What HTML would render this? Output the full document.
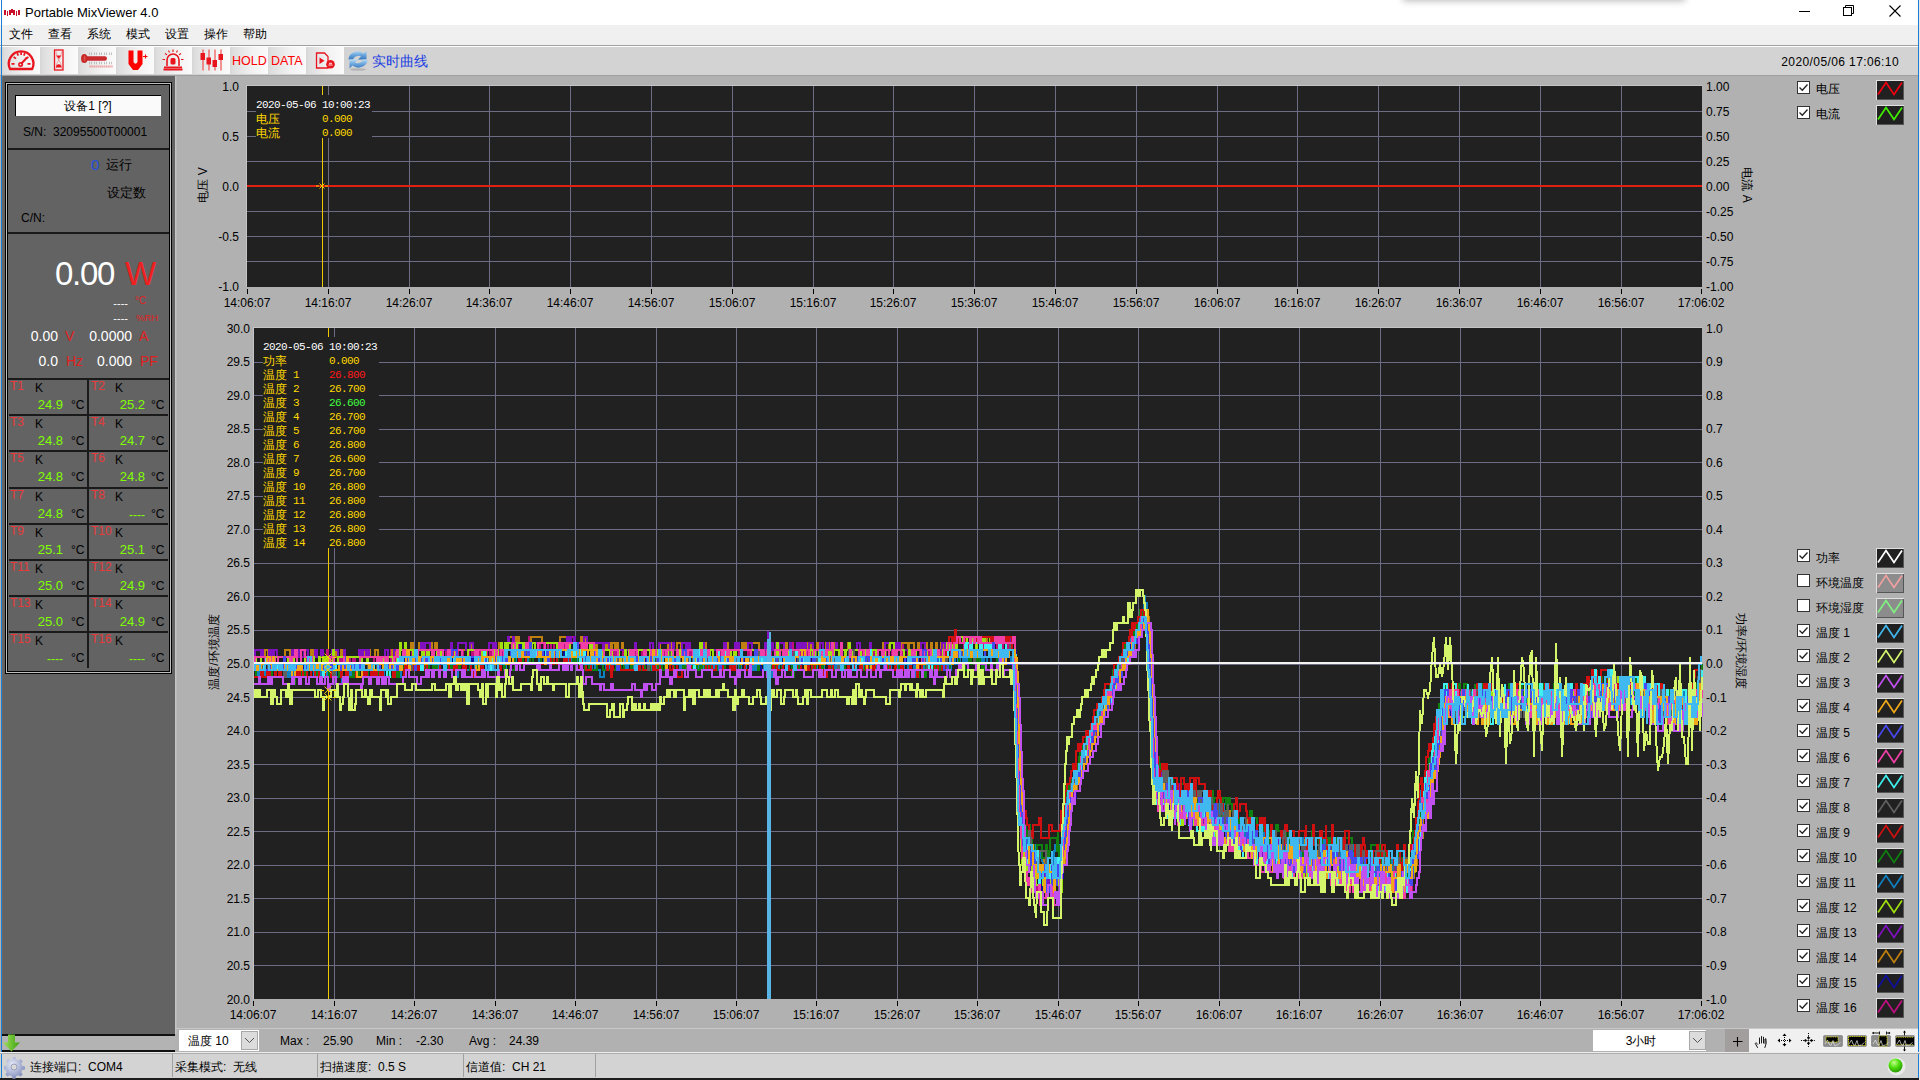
<!DOCTYPE html>
<html><head><meta charset="utf-8"><title>Portable MixViewer 4.0</title>
<style>
html,body{margin:0;padding:0;}
body{width:1920px;height:1080px;position:relative;overflow:hidden;background:#b3b3b3;font-family:"Liberation Sans",sans-serif;}
.b{position:absolute;}
.t{position:absolute;white-space:pre;font-family:"Liberation Sans",sans-serif;}
svg.b{overflow:visible;}
</style></head><body>
<div class="b" style="left:0px;top:0px;width:1920px;height:25px;background:#fff"></div>
<div class="b" style="left:0px;top:25px;width:1920px;height:20px;background:#f0f0f0"></div>
<div class="b" style="left:0px;top:45px;width:1920px;height:1px;background:#a0a0a0"></div>
<div class="b" style="left:0px;top:46px;width:1920px;height:1px;background:#fff"></div>
<div class="b" style="left:0px;top:47px;width:1920px;height:28px;background:#d3d3d3"></div>
<div class="b" style="left:0px;top:75px;width:1920px;height:1px;background:#a0a0a0"></div>
<div class="b" style="left:0px;top:76px;width:1920px;height:977px;background:#b1b1b1"></div>
<div class="b" style="left:0px;top:1053px;width:1920px;height:25px;background:#d3d3d3"></div>
<div class="b" style="left:0px;top:1078px;width:1920px;height:2px;background:#1c1c1c"></div>
<div class="b" style="left:1px;top:0px;width:1px;height:1078px;background:#1a7fd4"></div>
<div class="b" style="left:1918px;top:0px;width:1px;height:1078px;background:#1a7fd4"></div>
<div class="b" style="left:1919px;top:0px;width:1px;height:1080px;background:#e8e8e8"></div>
<div class="t" style="left:25px;top:0px;height:26px;line-height:26px;font-size:13px;color:#000;">Portable MixViewer 4.0</div>
<svg class="b" style="left:0;top:0" width="24" height="20" viewBox="0 0 24 20"><g fill="#c8102a"><rect x="4" y="10" width="2" height="5"/><rect x="7" y="11" width="1" height="5"/><path d="M9 10h2v-1h2v1h2v5h-2v-2h-2v2h-2z"/><rect x="16" y="11" width="1" height="5"/><rect x="18" y="10" width="2" height="5"/></g></svg>
<div class="b" style="left:1799px;top:11px;width:11px;height:1px;background:#000"></div>
<svg class="b" style="left:1843px;top:5px" width="12" height="12" viewBox="0 0 12 12"><rect x="0.5" y="2.5" width="8" height="8" fill="none" stroke="#000"/><path d="M2.5 2.5V0.5H10.5V8.5H8.5" fill="none" stroke="#000"/></svg>
<svg class="b" style="left:1889px;top:5px" width="12" height="12" viewBox="0 0 12 12"><path d="M0.5 0.5L11.5 11.5M11.5 0.5L0.5 11.5" stroke="#000" stroke-width="1.1"/></svg>
<div class="t" style="left:9px;top:22px;height:24px;line-height:24px;font-size:12px;color:#000;">文件</div>
<div class="t" style="left:48px;top:22px;height:24px;line-height:24px;font-size:12px;color:#000;">查看</div>
<div class="t" style="left:87px;top:22px;height:24px;line-height:24px;font-size:12px;color:#000;">系统</div>
<div class="t" style="left:126px;top:22px;height:24px;line-height:24px;font-size:12px;color:#000;">模式</div>
<div class="t" style="left:165px;top:22px;height:24px;line-height:24px;font-size:12px;color:#000;">设置</div>
<div class="t" style="left:204px;top:22px;height:24px;line-height:24px;font-size:12px;color:#000;">操作</div>
<div class="t" style="left:243px;top:22px;height:24px;line-height:24px;font-size:12px;color:#000;">帮助</div>
<div class="b" style="left:2px;top:47px;width:38px;height:27px;background:linear-gradient(to right,#d6d6d6 0,#dedede 3px,#f2f2f2 60%,#fbfbfb 100%)"></div>
<div class="b" style="left:40px;top:47px;width:38px;height:27px;background:linear-gradient(to right,#d6d6d6 0,#dedede 3px,#f2f2f2 60%,#fbfbfb 100%)"></div>
<div class="b" style="left:78px;top:47px;width:38px;height:27px;background:linear-gradient(to right,#d6d6d6 0,#dedede 3px,#f2f2f2 60%,#fbfbfb 100%)"></div>
<div class="b" style="left:116px;top:47px;width:38px;height:27px;background:linear-gradient(to right,#d6d6d6 0,#dedede 3px,#f2f2f2 60%,#fbfbfb 100%)"></div>
<div class="b" style="left:154px;top:47px;width:38px;height:27px;background:linear-gradient(to right,#d6d6d6 0,#dedede 3px,#f2f2f2 60%,#fbfbfb 100%)"></div>
<div class="b" style="left:192px;top:47px;width:38px;height:27px;background:linear-gradient(to right,#d6d6d6 0,#dedede 3px,#f2f2f2 60%,#fbfbfb 100%)"></div>
<div class="b" style="left:230px;top:47px;width:38px;height:27px;background:linear-gradient(to right,#d6d6d6 0,#dedede 3px,#f2f2f2 60%,#fbfbfb 100%)"></div>
<div class="b" style="left:268px;top:47px;width:38px;height:27px;background:linear-gradient(to right,#d6d6d6 0,#dedede 3px,#f2f2f2 60%,#fbfbfb 100%)"></div>
<div class="b" style="left:306px;top:47px;width:38px;height:27px;background:linear-gradient(to right,#d6d6d6 0,#dedede 3px,#f2f2f2 60%,#fbfbfb 100%)"></div>
<div class="t" style="right:21px;top:50px;height:24px;line-height:24px;font-size:12px;color:#000;text-align:right;letter-spacing:0.4px">2020/05/06 17:06:10</div>
<div class="b" style="left:1403px;top:-20px;width:282px;height:20px;background:#fff;box-shadow:0 1px 7px rgba(0,0,0,0.28)"></div>
<svg class="b" style="left:6px;top:49px" width="30" height="22" viewBox="0 0 30 22">
<path d="M4 20 A12.3 12.3 0 1 1 26.2 20 Z" fill="none" stroke="#e8141e" stroke-width="2.3" stroke-linejoin="round"/>
<g stroke="#e8141e" stroke-width="1.7"><path d="M5.5 14.8h3M21.5 14.8h3M7.6 8l2.4 1.6M20 9.6l2.4-1.6M11.2 4.2l1.1 2.5M17.8 6.7l1.1-2.5M15.1 3.2v2.8"/></g>
<path d="M15 15 L21 8.5" stroke="#e8141e" stroke-width="1.9"/><circle cx="14.6" cy="15.4" r="1.7" fill="none" stroke="#e8141e" stroke-width="1.6"/>
</svg>
<svg class="b" style="left:53px;top:49px" width="12" height="22" viewBox="0 0 12 22">
<rect x="1.5" y="1" width="8.5" height="20" fill="none" stroke="#e8141e" stroke-width="1.3"/>
<path d="M3 2.5 Q3 8 5.75 11 Q3 14 3 19.5 M8.5 2.5 Q8.5 8 5.75 11 Q8.5 14 8.5 19.5" fill="none" stroke="#f07070" stroke-width="0.6"/>
<path d="M3.3 6.5h4.9l-2.45 3.2z M3 18.5q0-3 2.75-3.3 2.75 0.3 2.75 3.3z" fill="#e8141e"/>
</svg>
<svg class="b" style="left:80px;top:51px" width="34" height="17" viewBox="0 0 34 17">
<g stroke="#b8b8b8" stroke-width="0.9"><path d="M9.5 1.5v2.5M11.5 1.5v2.5M14.5 1.5v2.5M16.5 1.5v2.5M19.5 1.5v2.5M21.5 1.5v2.5M24.5 1.5v2.5M26.5 1.5v2.5M29.5 1.5v2.5M31.5 1.5v2.5M9.5 10.8v2.5M11.5 10.8v2.5M14.5 10.8v2.5M16.5 10.8v2.5M19.5 10.8v2.5M21.5 10.8v2.5M24.5 10.8v2.5M26.5 10.8v2.5M29.5 10.8v2.5M31.5 10.8v2.5"/></g>
<rect x="4" y="5.3" width="23" height="4.4" rx="2.2" fill="#c92a30"/>
<ellipse cx="4.3" cy="7.5" rx="3.2" ry="4.5" fill="#c62828"/><ellipse cx="4.6" cy="7.5" rx="1" ry="3" fill="#e86a5a" opacity="0.6"/>
<path d="M9.5 15.6h23" stroke="#f08a8a" stroke-width="2" stroke-dasharray="1.2 0.8"/>
</svg>
<svg class="b" style="left:127px;top:49px" width="22" height="22" viewBox="0 0 22 22">
<path d="M1.5 1.5h5v11.5q2 3.5 4 0V1.5h5v13.5l-4.5 6h-5l-4.5-6z" fill="#f00"/>
<path d="M16 7.5h4.5M18.5 5.5v4" stroke="#f00" stroke-width="1.1"/>
</svg>
<svg class="b" style="left:162px;top:49px" width="22" height="22" viewBox="0 0 22 22">
<g stroke="#e8141e" stroke-width="1.1"><path d="M11 0.5v2.5M6.5 1.5l1 2M15.5 1.5l-1 2M3 4.5l2 1.3M19 4.5l-2 1.3M0.5 10.5h2.5M21.5 10.5h-2.5"/></g>
<path d="M5 17 V11 A6 6 0 0 1 17 11 V17" fill="none" stroke="#e8141e" stroke-width="1.6"/>
<rect x="8.5" y="9" width="5" height="6.5" rx="1.5" fill="#e8141e"/>
<rect x="2" y="17.5" width="18" height="1.8" fill="#e8141e"/><rect x="1.5" y="19.5" width="19" height="2" fill="#e8141e"/>
</svg>
<svg class="b" style="left:199px;top:49px" width="24" height="22" viewBox="0 0 24 22">
<g stroke="#f05050" stroke-width="1.2"><path d="M4 0.5v21M10 0.5v21M16 0.5v21M22 0.5v21"/></g>
<rect x="1.5" y="4" width="4.5" height="7" fill="#e8141e"/><rect x="7.5" y="8.5" width="4.5" height="7" fill="#e8141e"/>
<rect x="13.5" y="11" width="4.5" height="7" fill="#e8141e"/><rect x="19.5" y="5" width="4.5" height="6" fill="#e8141e"/>
</svg>
<div class="t" style="left:232px;top:48.5px;height:25.0px;line-height:25.0px;font-size:12.5px;color:#f00;">HOLD</div>
<div class="t" style="left:271px;top:48.5px;height:25.0px;line-height:25.0px;font-size:12.5px;color:#f00;">DATA</div>
<svg class="b" style="left:315px;top:52px" width="22" height="18" viewBox="0 0 22 18">
<path d="M1.5 1h8l3.5 3.5v11.5H1.5z" fill="none" stroke="#e8141e" stroke-width="1.3"/>
<path d="M4.5 5.5l5 3.3-5 3.3z" fill="#e8141e"/>
<circle cx="15.5" cy="12.2" r="4.3" fill="#e8141e"/><path d="M13.5 13h4M14 11.3h3" stroke="#fff" stroke-width="0.9"/>
</svg>
<svg class="b" style="left:346px;top:49px" width="24" height="22" viewBox="0 0 24 22">
<defs><linearGradient id="rg" x1="0" y1="0" x2="0" y2="1"><stop offset="0" stop-color="#b8dcf6"/><stop offset="0.5" stop-color="#6aa6dc"/><stop offset="1" stop-color="#3a78c0"/></linearGradient></defs>
<path d="M2.5 10.5 A9 8 0 0 1 17.5 4.5 L20.5 1.5 V10.5 H12 L15 7.5 A5.5 5 0 0 0 7 10.5 Z" fill="url(#rg)"/>
<path d="M21.5 10.5 A9 8 0 0 1 6.5 16.5 L3.5 19.5 V10.5 H12 L9 13.5 A5.5 5 0 0 0 17 10.5 Z" fill="url(#rg)"/>
<ellipse cx="12" cy="20.5" rx="8" ry="1.3" fill="#a0a0a0" opacity="0.6"/>
</svg>
<div class="t" style="left:372px;top:47px;height:28px;line-height:28px;font-size:14px;color:#1c3fe0;">实时曲线</div>
<div class="b" style="left:2px;top:76px;width:173px;height:958px;background:#636363"></div>
<div class="b" style="left:2px;top:76px;width:1px;height:958px;background:#6e6a66"></div>
<div class="b" style="left:175px;top:76px;width:1px;height:958px;background:#c4c4c4"></div>
<div class="b" style="left:176px;top:76px;width:1px;height:958px;background:#bababa"></div>
<div class="b" style="left:5px;top:82px;width:167px;height:592px;border:1px solid #000;box-sizing:border-box"></div>
<div class="b" style="left:6px;top:83px;width:165px;height:590px;border:1px solid #c0c0c0;box-sizing:border-box"></div>
<div class="b" style="left:7px;top:84px;width:163px;height:588px;border:1px solid #000;box-sizing:border-box"></div>
<div class="b" style="left:15px;top:95px;width:146px;height:21px;background:#fafafa;border-top:1px solid #000;border-left:1px solid #000;box-sizing:border-box"></div>
<div class="t" style="left:-112px;width:400px;top:94px;height:24px;line-height:24px;font-size:12px;color:#000;text-align:center;">设备1 [?]</div>
<div class="t" style="left:23px;top:120px;height:24px;line-height:24px;font-size:12px;color:#000;">S/N:&nbsp; 32095500T00001</div>
<div class="b" style="left:8px;top:148px;width:161px;height:2px;background:#1a1a1a"></div>
<div class="t" style="left:91px;top:150px;height:30px;line-height:30px;font-size:15px;color:#2050e0;">0</div>
<div class="t" style="left:106px;top:152px;height:26px;line-height:26px;font-size:13px;color:#000;">运行</div>
<div class="t" style="left:107px;top:180px;height:26px;line-height:26px;font-size:13px;color:#000;">设定数</div>
<div class="t" style="left:21px;top:206px;height:24px;line-height:24px;font-size:12px;color:#000;">C/N:</div>
<div class="b" style="left:8px;top:232px;width:161px;height:2px;background:#1a1a1a"></div>
<div class="t" style="right:1806px;top:241px;height:66px;line-height:66px;font-size:33px;color:#fff;text-align:right;letter-spacing:-1.3px">0.00</div>
<div class="t" style="left:125px;top:241px;height:66px;line-height:66px;font-size:33px;color:#f02020;">W</div>
<div class="t" style="right:1792px;top:292px;height:22px;line-height:22px;font-size:11px;color:#fff;text-align:right;">----</div>
<div class="t" style="left:135px;top:291px;height:20px;line-height:20px;font-size:10px;color:#e02020;">°C</div>
<div class="t" style="right:1792px;top:307px;height:22px;line-height:22px;font-size:11px;color:#fff;text-align:right;">----</div>
<div class="t" style="left:136px;top:307.5px;height:19.0px;line-height:19.0px;font-size:9.5px;color:#e02020;">%RH</div>
<div class="t" style="right:1862px;top:322px;height:28px;line-height:28px;font-size:14px;color:#fff;text-align:right;">0.00</div>
<div class="t" style="left:65px;top:322px;height:28px;line-height:28px;font-size:14px;color:#e02020;">V</div>
<div class="t" style="right:1788px;top:322px;height:28px;line-height:28px;font-size:14px;color:#fff;text-align:right;">0.0000</div>
<div class="t" style="left:139px;top:322px;height:28px;line-height:28px;font-size:14px;color:#e02020;">A</div>
<div class="t" style="right:1862px;top:347px;height:28px;line-height:28px;font-size:14px;color:#fff;text-align:right;">0.0</div>
<div class="t" style="left:66px;top:347px;height:28px;line-height:28px;font-size:14px;color:#e02020;">Hz</div>
<div class="t" style="right:1788px;top:347px;height:28px;line-height:28px;font-size:14px;color:#fff;text-align:right;">0.000</div>
<div class="t" style="left:140px;top:347px;height:28px;line-height:28px;font-size:14px;color:#e02020;">PF</div>
<div class="b" style="left:8px;top:378px;width:161px;height:2px;background:#1a1a1a"></div>
<div class="t" style="left:10px;top:374.0px;height:24px;line-height:24px;font-size:12px;color:#e83a3a;">T1</div>
<div class="t" style="left:35px;top:376.0px;height:24px;line-height:24px;font-size:12px;color:#000;">K</div>
<div class="t" style="right:1857px;top:392.0px;height:26px;line-height:26px;font-size:13px;color:#80ff00;text-align:right;">24.9</div>
<div class="t" style="left:71px;top:393.0px;height:24px;line-height:24px;font-size:12px;color:#000;">°C</div>
<div class="t" style="left:91px;top:374.0px;height:24px;line-height:24px;font-size:12px;color:#e83a3a;">T2</div>
<div class="t" style="left:115px;top:376.0px;height:24px;line-height:24px;font-size:12px;color:#000;">K</div>
<div class="t" style="right:1775px;top:392.0px;height:26px;line-height:26px;font-size:13px;color:#80ff00;text-align:right;">25.2</div>
<div class="t" style="left:151px;top:393.0px;height:24px;line-height:24px;font-size:12px;color:#000;">°C</div>
<div class="b" style="left:9px;top:414px;width:159px;height:2px;background:#1a1a1a"></div>
<div class="t" style="left:10px;top:410.2px;height:24px;line-height:24px;font-size:12px;color:#e83a3a;">T3</div>
<div class="t" style="left:35px;top:412.2px;height:24px;line-height:24px;font-size:12px;color:#000;">K</div>
<div class="t" style="right:1857px;top:428.2px;height:26px;line-height:26px;font-size:13px;color:#80ff00;text-align:right;">24.8</div>
<div class="t" style="left:71px;top:429.2px;height:24px;line-height:24px;font-size:12px;color:#000;">°C</div>
<div class="t" style="left:91px;top:410.2px;height:24px;line-height:24px;font-size:12px;color:#e83a3a;">T4</div>
<div class="t" style="left:115px;top:412.2px;height:24px;line-height:24px;font-size:12px;color:#000;">K</div>
<div class="t" style="right:1775px;top:428.2px;height:26px;line-height:26px;font-size:13px;color:#80ff00;text-align:right;">24.7</div>
<div class="t" style="left:151px;top:429.2px;height:24px;line-height:24px;font-size:12px;color:#000;">°C</div>
<div class="b" style="left:9px;top:450px;width:159px;height:2px;background:#1a1a1a"></div>
<div class="t" style="left:10px;top:446.4px;height:24px;line-height:24px;font-size:12px;color:#e83a3a;">T5</div>
<div class="t" style="left:35px;top:448.4px;height:24px;line-height:24px;font-size:12px;color:#000;">K</div>
<div class="t" style="right:1857px;top:464.4px;height:26px;line-height:26px;font-size:13px;color:#80ff00;text-align:right;">24.8</div>
<div class="t" style="left:71px;top:465.4px;height:24px;line-height:24px;font-size:12px;color:#000;">°C</div>
<div class="t" style="left:91px;top:446.4px;height:24px;line-height:24px;font-size:12px;color:#e83a3a;">T6</div>
<div class="t" style="left:115px;top:448.4px;height:24px;line-height:24px;font-size:12px;color:#000;">K</div>
<div class="t" style="right:1775px;top:464.4px;height:26px;line-height:26px;font-size:13px;color:#80ff00;text-align:right;">24.8</div>
<div class="t" style="left:151px;top:465.4px;height:24px;line-height:24px;font-size:12px;color:#000;">°C</div>
<div class="b" style="left:9px;top:487px;width:159px;height:2px;background:#1a1a1a"></div>
<div class="t" style="left:10px;top:482.6px;height:24px;line-height:24px;font-size:12px;color:#e83a3a;">T7</div>
<div class="t" style="left:35px;top:484.6px;height:24px;line-height:24px;font-size:12px;color:#000;">K</div>
<div class="t" style="right:1857px;top:500.6px;height:26px;line-height:26px;font-size:13px;color:#80ff00;text-align:right;">24.8</div>
<div class="t" style="left:71px;top:501.6px;height:24px;line-height:24px;font-size:12px;color:#000;">°C</div>
<div class="t" style="left:91px;top:482.6px;height:24px;line-height:24px;font-size:12px;color:#e83a3a;">T8</div>
<div class="t" style="left:115px;top:484.6px;height:24px;line-height:24px;font-size:12px;color:#000;">K</div>
<div class="t" style="right:1775px;top:502.6px;height:24px;line-height:24px;font-size:12px;color:#80ff00;text-align:right;">----</div>
<div class="t" style="left:151px;top:501.6px;height:24px;line-height:24px;font-size:12px;color:#000;">°C</div>
<div class="b" style="left:9px;top:523px;width:159px;height:2px;background:#1a1a1a"></div>
<div class="t" style="left:10px;top:518.8px;height:24px;line-height:24px;font-size:12px;color:#e83a3a;">T9</div>
<div class="t" style="left:35px;top:520.8px;height:24px;line-height:24px;font-size:12px;color:#000;">K</div>
<div class="t" style="right:1857px;top:536.8px;height:26px;line-height:26px;font-size:13px;color:#80ff00;text-align:right;">25.1</div>
<div class="t" style="left:71px;top:537.8px;height:24px;line-height:24px;font-size:12px;color:#000;">°C</div>
<div class="t" style="left:91px;top:518.8px;height:24px;line-height:24px;font-size:12px;color:#e83a3a;">T10</div>
<div class="t" style="left:115px;top:520.8px;height:24px;line-height:24px;font-size:12px;color:#000;">K</div>
<div class="t" style="right:1775px;top:536.8px;height:26px;line-height:26px;font-size:13px;color:#80ff00;text-align:right;">25.1</div>
<div class="t" style="left:151px;top:537.8px;height:24px;line-height:24px;font-size:12px;color:#000;">°C</div>
<div class="b" style="left:9px;top:559px;width:159px;height:2px;background:#1a1a1a"></div>
<div class="t" style="left:10px;top:555.0px;height:24px;line-height:24px;font-size:12px;color:#e83a3a;">T11</div>
<div class="t" style="left:35px;top:557.0px;height:24px;line-height:24px;font-size:12px;color:#000;">K</div>
<div class="t" style="right:1857px;top:573.0px;height:26px;line-height:26px;font-size:13px;color:#80ff00;text-align:right;">25.0</div>
<div class="t" style="left:71px;top:574.0px;height:24px;line-height:24px;font-size:12px;color:#000;">°C</div>
<div class="t" style="left:91px;top:555.0px;height:24px;line-height:24px;font-size:12px;color:#e83a3a;">T12</div>
<div class="t" style="left:115px;top:557.0px;height:24px;line-height:24px;font-size:12px;color:#000;">K</div>
<div class="t" style="right:1775px;top:573.0px;height:26px;line-height:26px;font-size:13px;color:#80ff00;text-align:right;">24.9</div>
<div class="t" style="left:151px;top:574.0px;height:24px;line-height:24px;font-size:12px;color:#000;">°C</div>
<div class="b" style="left:9px;top:595px;width:159px;height:2px;background:#1a1a1a"></div>
<div class="t" style="left:10px;top:591.2px;height:24px;line-height:24px;font-size:12px;color:#e83a3a;">T13</div>
<div class="t" style="left:35px;top:593.2px;height:24px;line-height:24px;font-size:12px;color:#000;">K</div>
<div class="t" style="right:1857px;top:609.2px;height:26px;line-height:26px;font-size:13px;color:#80ff00;text-align:right;">25.0</div>
<div class="t" style="left:71px;top:610.2px;height:24px;line-height:24px;font-size:12px;color:#000;">°C</div>
<div class="t" style="left:91px;top:591.2px;height:24px;line-height:24px;font-size:12px;color:#e83a3a;">T14</div>
<div class="t" style="left:115px;top:593.2px;height:24px;line-height:24px;font-size:12px;color:#000;">K</div>
<div class="t" style="right:1775px;top:609.2px;height:26px;line-height:26px;font-size:13px;color:#80ff00;text-align:right;">24.9</div>
<div class="t" style="left:151px;top:610.2px;height:24px;line-height:24px;font-size:12px;color:#000;">°C</div>
<div class="b" style="left:9px;top:631px;width:159px;height:2px;background:#1a1a1a"></div>
<div class="t" style="left:10px;top:627.4000000000001px;height:24px;line-height:24px;font-size:12px;color:#e83a3a;">T15</div>
<div class="t" style="left:35px;top:629.4000000000001px;height:24px;line-height:24px;font-size:12px;color:#000;">K</div>
<div class="t" style="right:1857px;top:647.4000000000001px;height:24px;line-height:24px;font-size:12px;color:#80ff00;text-align:right;">----</div>
<div class="t" style="left:71px;top:646.4000000000001px;height:24px;line-height:24px;font-size:12px;color:#000;">°C</div>
<div class="t" style="left:91px;top:627.4000000000001px;height:24px;line-height:24px;font-size:12px;color:#e83a3a;">T16</div>
<div class="t" style="left:115px;top:629.4000000000001px;height:24px;line-height:24px;font-size:12px;color:#000;">K</div>
<div class="t" style="right:1775px;top:647.4000000000001px;height:24px;line-height:24px;font-size:12px;color:#80ff00;text-align:right;">----</div>
<div class="t" style="left:151px;top:646.4000000000001px;height:24px;line-height:24px;font-size:12px;color:#000;">°C</div>
<div class="b" style="left:87px;top:378px;width:2px;height:290px;background:#1a1a1a"></div>
<div class="b" style="left:2px;top:1034px;width:173px;height:2px;background:#111"></div>
<div class="b" style="left:2px;top:1036px;width:173px;height:15px;background:#b3b3b3"></div>
<div class="b" style="left:2px;top:1050px;width:173px;height:2px;background:#111"></div>
<svg class="b" style="left:3px;top:1034px" width="18" height="18" viewBox="0 0 18 18">
<defs><linearGradient id="ga" x1="0" y1="0" x2="1" y2="0"><stop offset="0" stop-color="#9ee05a"/><stop offset="1" stop-color="#3ea010"/></linearGradient></defs>
<path d="M5 0.5h7v8h5l-8.5 9-8.5-9h5z" fill="url(#ga)"/></svg>
<div class="b" style="left:246px;top:85px;width:1456px;height:1px;background:#c4c4c4"></div>
<div class="b" style="left:246px;top:85px;width:1px;height:202px;background:#c4c4c4"></div>
<svg class="b" style="left:247px;top:86px" width="1455" height="201" viewBox="247 86 1455 201"><rect x="247" y="86" width="1455" height="201" fill="#212121"/><path d="M247 111.5H1702M247 136.5H1702M247 161.5H1702M247 186.5H1702M247 211.5H1702M247 236.5H1702M247 261.5H1702M328.5 86V287M409.5 86V287M489.5 86V287M570.5 86V287M651.5 86V287M732.5 86V287M813.5 86V287M893.5 86V287M974.5 86V287M1055.5 86V287M1136.5 86V287M1217.5 86V287M1297.5 86V287M1378.5 86V287M1459.5 86V287M1540.5 86V287M1621.5 86V287" stroke="#6c6c84" stroke-width="1" fill="none" shape-rendering="crispEdges"/><rect x="247" y="185" width="1455" height="2" fill="#e02010"/><rect x="322" y="86" width="1" height="201" fill="#f0c800"/><path d="M319.5 183.5l5 5M324.5 183.5l-5 5" stroke="#f0d000" stroke-width="1"/><path d="M316 186h3M325 186h3" stroke="#f0d000" stroke-width="1"/><rect x="256" y="95" width="116" height="43" fill="#212121"/></svg>
<div class="t" style="left:256px;top:94px;height:22px;line-height:22px;font-size:11px;color:#fff;font-family:'Liberation Mono',monospace;letter-spacing:-0.6px">2020-05-06 10:00:23</div>
<div class="t" style="left:256px;top:107px;height:24px;line-height:24px;font-size:12px;color:#ffd800;">电压</div>
<div class="t" style="left:322px;top:108px;height:22px;line-height:22px;font-size:11px;color:#ffd800;font-family:'Liberation Mono',monospace;letter-spacing:-0.6px">0.000</div>
<div class="t" style="left:256px;top:121px;height:24px;line-height:24px;font-size:12px;color:#ffd800;">电流</div>
<div class="t" style="left:322px;top:122px;height:22px;line-height:22px;font-size:11px;color:#ffd800;font-family:'Liberation Mono',monospace;letter-spacing:-0.6px">0.000</div>
<div class="t" style="right:1681px;top:75px;height:24px;line-height:24px;font-size:12px;color:#000;text-align:right;">1.0</div>
<div class="t" style="right:1681px;top:125px;height:24px;line-height:24px;font-size:12px;color:#000;text-align:right;">0.5</div>
<div class="t" style="right:1681px;top:175px;height:24px;line-height:24px;font-size:12px;color:#000;text-align:right;">0.0</div>
<div class="t" style="right:1681px;top:225px;height:24px;line-height:24px;font-size:12px;color:#000;text-align:right;">-0.5</div>
<div class="t" style="right:1681px;top:275px;height:24px;line-height:24px;font-size:12px;color:#000;text-align:right;">-1.0</div>
<div class="t" style="left:1706px;top:75px;height:24px;line-height:24px;font-size:12px;color:#000;">1.00</div>
<div class="t" style="left:1706px;top:100px;height:24px;line-height:24px;font-size:12px;color:#000;">0.75</div>
<div class="t" style="left:1706px;top:125px;height:24px;line-height:24px;font-size:12px;color:#000;">0.50</div>
<div class="t" style="left:1706px;top:150px;height:24px;line-height:24px;font-size:12px;color:#000;">0.25</div>
<div class="t" style="left:1706px;top:175px;height:24px;line-height:24px;font-size:12px;color:#000;">0.00</div>
<div class="t" style="left:1706px;top:200px;height:24px;line-height:24px;font-size:12px;color:#000;">-0.25</div>
<div class="t" style="left:1706px;top:225px;height:24px;line-height:24px;font-size:12px;color:#000;">-0.50</div>
<div class="t" style="left:1706px;top:250px;height:24px;line-height:24px;font-size:12px;color:#000;">-0.75</div>
<div class="t" style="left:1706px;top:275px;height:24px;line-height:24px;font-size:12px;color:#000;">-1.00</div>
<div class="t" style="left:47px;width:400px;top:291px;height:24px;line-height:24px;font-size:12px;color:#000;text-align:center;">14:06:07</div>
<div class="t" style="left:128px;width:400px;top:291px;height:24px;line-height:24px;font-size:12px;color:#000;text-align:center;">14:16:07</div>
<div class="t" style="left:209px;width:400px;top:291px;height:24px;line-height:24px;font-size:12px;color:#000;text-align:center;">14:26:07</div>
<div class="t" style="left:289px;width:400px;top:291px;height:24px;line-height:24px;font-size:12px;color:#000;text-align:center;">14:36:07</div>
<div class="t" style="left:370px;width:400px;top:291px;height:24px;line-height:24px;font-size:12px;color:#000;text-align:center;">14:46:07</div>
<div class="t" style="left:451px;width:400px;top:291px;height:24px;line-height:24px;font-size:12px;color:#000;text-align:center;">14:56:07</div>
<div class="t" style="left:532px;width:400px;top:291px;height:24px;line-height:24px;font-size:12px;color:#000;text-align:center;">15:06:07</div>
<div class="t" style="left:613px;width:400px;top:291px;height:24px;line-height:24px;font-size:12px;color:#000;text-align:center;">15:16:07</div>
<div class="t" style="left:693px;width:400px;top:291px;height:24px;line-height:24px;font-size:12px;color:#000;text-align:center;">15:26:07</div>
<div class="t" style="left:774px;width:400px;top:291px;height:24px;line-height:24px;font-size:12px;color:#000;text-align:center;">15:36:07</div>
<div class="t" style="left:855px;width:400px;top:291px;height:24px;line-height:24px;font-size:12px;color:#000;text-align:center;">15:46:07</div>
<div class="t" style="left:936px;width:400px;top:291px;height:24px;line-height:24px;font-size:12px;color:#000;text-align:center;">15:56:07</div>
<div class="t" style="left:1017px;width:400px;top:291px;height:24px;line-height:24px;font-size:12px;color:#000;text-align:center;">16:06:07</div>
<div class="t" style="left:1097px;width:400px;top:291px;height:24px;line-height:24px;font-size:12px;color:#000;text-align:center;">16:16:07</div>
<div class="t" style="left:1178px;width:400px;top:291px;height:24px;line-height:24px;font-size:12px;color:#000;text-align:center;">16:26:07</div>
<div class="t" style="left:1259px;width:400px;top:291px;height:24px;line-height:24px;font-size:12px;color:#000;text-align:center;">16:36:07</div>
<div class="t" style="left:1340px;width:400px;top:291px;height:24px;line-height:24px;font-size:12px;color:#000;text-align:center;">16:46:07</div>
<div class="t" style="left:1421px;width:400px;top:291px;height:24px;line-height:24px;font-size:12px;color:#000;text-align:center;">16:56:07</div>
<div class="t" style="left:1501px;width:400px;top:291px;height:24px;line-height:24px;font-size:12px;color:#000;text-align:center;">17:06:02</div>
<svg class="b" style="left:0;top:0" width="1920" height="1080"><path d="M247.5 289V294M328.5 289V294M409.5 289V294M489.5 289V294M570.5 289V294M651.5 289V294M732.5 289V294M813.5 289V294M893.5 289V294M974.5 289V294M1055.5 289V294M1136.5 289V294M1217.5 289V294M1297.5 289V294M1378.5 289V294M1459.5 289V294M1540.5 289V294M1621.5 289V294M1701.5 289V294" stroke="#000" stroke-width="1" shape-rendering="crispEdges"/></svg>
<div class="t" style="left:103px;top:173px;width:200px;height:24px;line-height:24px;font-size:12px;color:#000;text-align:center;transform:rotate(-90deg)">电压 V</div>
<div class="t" style="left:1647px;top:173px;width:200px;height:24px;line-height:24px;font-size:12px;color:#000;text-align:center;transform:rotate(90deg)">电流 A</div>
<div class="b" style="left:253px;top:327px;width:1449px;height:1px;background:#c4c4c4"></div>
<div class="b" style="left:253px;top:327px;width:1px;height:672px;background:#c4c4c4"></div>
<svg class="b" style="left:254px;top:328px" width="1448" height="671" viewBox="254 328 1448 671"><rect x="254" y="328" width="1448" height="671" fill="#212121"/><path d="M254 362.5H1702M254 395.5H1702M254 429.5H1702M254 462.5H1702M254 496.5H1702M254 529.5H1702M254 563.5H1702M254 596.5H1702M254 630.5H1702M254 664.5H1702M254 697.5H1702M254 731.5H1702M254 764.5H1702M254 798.5H1702M254 831.5H1702M254 865.5H1702M254 898.5H1702M254 932.5H1702M254 965.5H1702M334.5 328V999M414.5 328V999M495.5 328V999M575.5 328V999M656.5 328V999M736.5 328V999M816.5 328V999M897.5 328V999M977.5 328V999M1058.5 328V999M1138.5 328V999M1219.5 328V999M1299.5 328V999M1380.5 328V999M1460.5 328V999M1540.5 328V999M1621.5 328V999" stroke="#6c6c84" stroke-width="1" fill="none" shape-rendering="crispEdges"/><rect x="328" y="328" width="1" height="671" fill="#f0c800"/><path d="M254 664H256V657H265V664H269V657H278V664H289V657H292V664H297V657H306V664H309V657H320V664H323V657H324V664H327V650H328V657H331V664H333V657H340V664H342V657H345V664H348V657H350V664H353V657H355V664H361V657H362V664H374V657H377V664H384V657H387V664H391V650H392V664H395V650H397V657H399V664H402V657H404V664H406V657H408V650H412V657H414V650H426V657H432V650H440V657H446V650H447V657H448V650H449V657H454V650H456V657H458V650H463V657H469V650H472V657H474V650H479V657H480V650H483V657H486V650H487V657H490V650H492V657H497V650H499V657H500V650H503V664H505V657H507V650H513V643H514V650H519V643H527V650H529V637H530V643H531V650H538V643H540V650H544V643H548V650H551V643H554V650H557V643H558V657H559V643H561V650H565V643H566V650H570V637H575V650H578V643H581V650H583V643H584V650H586V657H591V650H594V657H595V650H597V657H611V650H613V657H614V650H615V657H616V650H618V664H622V657H623V650H631V657H635V643H636V650H637V657H642V650H644V657H645V650H653V657H658V650H660V657H661V650H663V657H664V650H666V657H670V650H677V657H683V650H689V657H691V650H693V657H698V650H699V657H706V650H713V657H719V650H720V657H722V650H723V657H724V650H725V657H730V650H734V657H739V650H748V657H750V650H755V657H756V650H765V657H770V650H771V657H772V664H775V657H776V650H778V657H780V650H783V657H784V650H786V657H787V650H790V657H792V643H793V657H796V650H799V657H800V650H803V657H805V650H807V657H809V650H811V657H821V650H828V657H829V650H833V657H845V650H851V657H852V650H861V657H863V650H868V657H870V650H871V657H872V650H874V657H877V650H882V657H884V650H885V657H886V650H892V657H895V650H901V657H902V643H903V650H908V657H910V650H911V657H914V650H920V657H928V650H929V657H931V650H934V657H937V650H940V664H941V650H944V657H945V650H947V657H951V650H953V643H954V650H957V643H964V650H969V643H971V650H976V643H977V637H981V650H983V643H986V650H988V643H990V650H997V643H1001V650H1003V643H1006V650H1008V643H1012V650H1015V643L1016 710L1017 737H1018V751H1019V771H1020V791L1021 818H1022V838H1023V845H1025V858H1026V851H1028V865H1030V851H1031V858H1032V872H1034V892H1037V885H1038V892H1039V878H1041V892H1051V898H1053V878H1054V885H1055V872H1057V885H1061V898L1062 865H1063V858H1064V838H1065V825H1066V818H1067V811H1068V798H1071V791H1074V778H1076V771H1077V778H1079V771H1081V757H1083V764H1084V757H1085V751H1086V744H1088V751H1089V744H1090V737H1091V744H1092V737H1094V731H1097V717H1098V724H1100V717H1102V710H1103V704H1108V697H1111V684H1113V690H1114V677H1117V670H1119V677H1120V664H1124V657H1126V650H1132V643H1134V637H1137V630H1138V623H1140V630H1141V623H1144V610H1147V617H1148V630H1149V650H1150V670L1151 704H1152V724H1153V744H1154V757L1155 778H1156V798H1157V778L1158 804H1160V798H1162V804H1163V811H1165V798H1166V804H1168V798H1174V818H1175V811H1176V818L1177 791H1178L1179 818H1181V825L1182 804H1183V798H1184V804H1187V811H1195V804H1200L1201 831H1202V825H1204V818H1206V825H1207V818H1209V831H1211V811L1212 838H1219V818H1220V825H1221V818H1222V831H1223V818H1224V831H1228V838H1233V831H1234V838H1236V845H1237V825H1239V845H1242V851L1243 825H1246V831H1247V851H1252V858H1255L1256 831L1257 858H1258V865L1259 838H1260V851H1261V858H1265V865H1267V851H1268V838H1270V845H1271V851H1272V845H1277V865H1278V858H1280V872L1281 845H1282V858H1290V845H1291V865H1292V845H1295L1296 872H1297L1298 851H1299V858H1303V865H1306V878H1308V872H1314V878H1316V872H1317V878H1319V865H1320V878H1321V872H1322V858H1323V851H1324L1325 872L1326 851H1327V865H1328V858H1329V872H1339V878H1345V858H1347V865H1350V885H1355L1356 858H1358V878H1359V865H1360V872H1362V865H1365V858L1366 885H1368L1369 858H1370V865H1383V878H1385V865H1388V885H1390V892H1398L1399 865H1400L1401 892H1412V878H1413V872H1414L1415 838H1417V831H1418V825H1419V838H1421V818H1422V804H1423V811H1425V804H1426L1427 778H1428V784H1430V778H1432V771H1433V764H1435V757H1436V744H1437V751H1438V744H1439V737H1440V731L1441 710H1442V704H1443V697H1444V690L1445 717H1446V710H1453V717L1454 690L1455 717H1459V704H1460V697H1462V704H1466V710H1468V697H1469V690H1470V710H1474V697H1475V717H1478V710H1479V717H1484V710H1486V690H1488V704H1490V717H1492L1493 690H1494V697H1500V690H1502L1503 717H1506L1507 690H1508V697H1511V717H1515V697H1518V704H1519V697H1525V690H1526V710H1527V717H1529V710H1539V690H1543V704H1547V710H1550V690H1551V710H1552V717L1553 690H1554V710H1556V690H1558V704H1560V697H1565V710H1575V690L1576 717H1578V697H1579V690H1581V710H1582V690H1583V710H1584V704H1585V697H1586V717H1591V704H1592V710H1593V697H1594V704H1599V684H1601V697H1602V710H1603V690H1606V684H1609V697H1610V684H1613L1614 710H1617V690H1618V710H1623V697H1627V690H1629V710H1634V697H1635V704H1636V684H1638L1639 710H1641V697H1643V684H1645V690H1646V710H1647V717H1648V710H1650V704H1651V710H1652V704H1653V717H1654V697H1656V704H1662V697H1665V717H1671V697H1673V717H1674V724H1675V717H1683V710H1684V704H1685V717H1693L1694 690H1696V684H1698V697H1699V684H1700V677H1702V670" stroke="#c01080" stroke-width="2" fill="none" stroke-linejoin="miter" shape-rendering="crispEdges"/><path d="M254 670H255V664H259V670H268V664H277V670H283V664H285V670H287V664H290V670H293V664H295V670H297V664H299V670H303V664H306V670H307V664H311V670H315V664H322V670H325V664H332V677H335V664H340V670H346V664H350V670H351V664H354V670H359V664H361V670H368V664H373V670H379V664H383V670H390V664H396V670H398V664H403V657H404V664H411V657H414V664H415V657H416V664H422V657H425V664H431V657H436V664H442V657H453V664H458V657H459V664H464V657H467V664H469V657H472V664H473V657H476V664H477V657H483V664H487V657H494V664H498V657H501V664H502V657H513V650H515V657H516V650H520V643H522V657H524V650H528V657H531V650H533V657H544V650H545V657H547V650H550V664H552V650H555V657H559V650H560V643H563V650H564V657H569V650H575V657H576V650H577V657H578V650H581V657H584V650H587V657H588V664H598V657H605V664H606V657H607V664H611V657H613V664H617V657H626V664H627V657H644V664H645V657H651V664H654V657H657V650H660V664H661V657H670V664H684V657H694V664H698V657H699V664H704V657H707V664H709V657H712V664H713V657H714V664H718V657H720V664H721V657H724V664H725V657H726V664H735V657H740V664H741V657H742V664H743V657H745V664H747V657H750V664H759V670H761V664H773V670H776V664H781V657H782V664H783V657H788V664H790V657H792V664H794V657H796V664H800V657H806V664H808V657H813V664H821V657H822V664H823V657H829V664H831V657H838V664H843V657H847V664H850V650H851V664H853V657H860V664H861V657H863V664H864V657H866V664H868V657H871V664H873V657H874V664H881V657H885V664H887V657H890V664H893V657H896V664H901V657H906V664H910V657H911V664H912V657H914V670H918V664H923V657H925V664H927V657H930V664H937V657H939V670H941V664H945V657H952V664H953V657H954V650H960V657H961V650H962V657H975V650H979V657H980V650H982V657H990V650H991V657H995V650H1004V657H1009V650H1016V664L1017 690L1018 717H1019V737H1020V757L1021 784L1022 811L1023 851H1026V858H1027V865H1028V851H1031V858H1032V865H1035V872H1036V865H1039V872H1040V892H1042L1043 865H1048V872H1052V892H1053V885H1056V872H1057V865H1060V878H1061V892H1062V878H1063V858H1064V851H1065V838H1066V831H1067V818H1068V811H1069V798H1070V804H1071V784H1072V791H1073V784H1075V798H1076V791H1077V778H1078V771H1081V764H1083V757H1084V764H1086V757H1089V751H1090V744H1091V737H1092V744H1094V737H1095V731H1097V724H1102V717H1103V710H1104V717H1105V710H1108V704H1109V697H1113V684H1115V690H1116V684H1119V670H1124V664H1128V657H1130V650H1131V643H1132V650H1134V637H1136V643H1137V637H1140V630H1143V623H1146V610H1147V617H1148V630H1149V637H1150V657H1151V670H1152V690H1153V710L1154 744H1155V757L1156 778H1157V771H1159V778H1164V798H1166V778H1168L1169 804H1170V811H1172V798H1174V804H1177V791H1182V811H1185V798H1188V804H1192V791H1196V798L1197 825H1198V818H1199V811H1201V818H1207V811H1208V798H1210V804H1211V818H1212V831H1213V811H1215V825H1216V811H1229V825H1235V818H1239V838H1244V825H1245V831H1246V825H1247V831H1248V845H1249V838H1250V831H1251V838H1253V831H1256V845H1257V851H1259V858H1262V845H1265V851H1266V845H1267V858H1272V845H1273V865L1274 838H1275L1276 865H1277V858H1280V838H1287V851H1288V838H1289V851H1291V845H1295V851H1299V865H1301V851H1302V865H1304V872H1306L1307 851H1308L1309 872H1311V858H1312V872H1314V865H1315V851H1318L1319 872L1320 845H1322V851H1324V845H1325L1326 872H1327L1328 845H1329V865H1332V845H1338L1339 872H1341V865H1342V872L1343 851H1344V858H1345V845H1348V865H1351V858H1355V851L1356 878H1358V858H1359V878H1360V872H1361L1362 851H1364V858H1366V878H1367V872H1371V878H1372V865H1374V858H1375V872H1377V878H1381V872H1382V878H1383V872H1385V878H1388V865H1390V878H1391V872H1392V885H1393V872H1394V878H1395V885H1396V865H1397V885H1398V865H1401V872H1402V865H1403V878H1404V865H1405V885H1406V878H1407V885H1409V872H1410V878H1411V865H1412V858H1414V851H1415V858H1416V851H1417V845H1418V831H1419V818H1420V811H1421V831L1422 798H1423V811H1425V791H1427V784H1428V778H1430V784H1431V778H1432V771H1433V764H1435V771H1436V764H1437V744H1438V737H1439V731H1440V737H1441V731H1442V724H1443V717H1444V710H1445V697H1446V690L1447 717H1451V710H1454V704H1457V690H1463V697H1465V690H1468V704H1470V717H1474V710H1477V704H1480V717H1481V704H1482V697H1483V704H1484V717H1487V704H1489V697H1490V704H1491V697H1492V710H1493V704H1494V690H1495V710H1496V697H1498V710H1500V704H1501V717H1503V704H1508V717H1509V697H1516V710H1518V697H1521V690H1523V704H1529V690H1532V704H1533V710H1534V704H1538V697H1539V710H1540V717H1541V704H1548V717H1549V704H1552V690H1553L1554 717H1559V697H1561V717H1565L1566 690L1567 717H1570V697H1572V690H1577V710H1580V697H1585V704H1588V710H1589V717H1591V710H1592V697H1597V690H1598V684H1603V697H1607V704H1609V684H1612V697H1614V704H1616V684H1617V677H1619V690H1620V677H1625L1626 704H1627V697H1628V704H1634V697H1639V690H1641V684H1643V677L1644 710H1650V717H1652V704H1657V710H1659V690H1662V704H1664V690H1665V704H1666V697H1668V710H1670V704H1671V710H1674V697H1675V717L1676 690H1677L1678 717H1681L1682 690H1683V710H1684V690H1685V710H1687V717H1688V697H1694V690H1696V684H1699V677H1700V684H1701V677H1702" stroke="#1010a0" stroke-width="2" fill="none" stroke-linejoin="miter" shape-rendering="crispEdges"/><path d="M254 657H265V650H268V657H269V650H270V657H285V650H290V657H311V650H312V657H313V650H314V657H332V650H336V657H341V650H343V657H364V650H370V657H375V650H378V657H392V650H393V657H396V650H397V657H404V650H411V643H413V650H419V643H420V650H422V643H432V650H435V643H437V650H470V643H471V650H499V643H502V650H508V643H509V637H516V643H517V637H519V643H531V637H542V643H560V637H569V643H581V637H582V643H586V637H587V643H596V650H597V643H606V650H607V643H608V650H610V643H611V650H612V643H615V650H616V643H618V650H622V643H623V650H660V643H668V650H669V643H672V650H677V643H681V650H703V643H704V650H705V643H706V650H727V643H728V650H737V643H738V650H742V643H743V650H744V643H745V650H747V643H759V650H786V643H787V650H805V643H806V650H807V643H808V650H810V643H812V650H817V643H818V650H826V643H829V650H832V643H835V650H848V643H850V650H883V643H889V650H890V643H895V650H896V643H898V650H901V643H908V650H909V643H914V650H918V643H919V650H926V643H927V650H931V643H932V650H936V643H937V650H941V643H943V650H954V643H960V637H966V643H970V637H971V643H987V637H990V643H999V637H1004V643H1015L1016 664H1017V677L1018 704L1019 731H1020V744L1021 771L1022 798L1023 825H1024V845H1025V851H1029V865H1031V845H1033V851H1034L1035 872H1036V878H1040V865H1043V885L1044 858L1045 885H1046V872H1047V885H1049V865H1052V878H1055V865H1056V872H1060V858H1061V865H1062V858H1064V865H1065V858H1066V845H1067V838H1068V825H1069V811H1070V804H1072V798H1073V791H1074V778H1075V791H1077V784H1079V771H1081V778H1082V771H1084V764H1087V751H1091V744H1092V737H1095V731H1097V724H1098V731H1099V724H1100V717H1102V724H1103V717H1104V710H1109V704H1111V697H1113V690H1114V684H1115V690H1116V684H1117V677H1120V670H1123V664H1126V657H1129V650H1130V657H1131V650H1132V643H1133V650H1135V637H1141V630H1144V623H1145V617H1147V610H1148V617H1149V637H1150L1151 664H1152V684H1153V704H1154V724H1155L1156 771H1157V791H1159V771L1160 798H1165V804H1168V791H1170V798H1172V811H1173V804H1179V798H1181V811H1183V818L1184 791H1187V798H1188V791H1189V798H1190V811H1195V791H1196V804H1200V818H1202V798H1203V804H1206V818H1207V811H1208V804H1209V811H1210V798H1211V811H1215V804H1217L1218 831H1221L1222 804H1224V818H1227V811H1230L1231 838H1233L1234 811H1235L1236 845H1237V831H1241V818H1247V825H1248V831H1249V851H1250V831H1251V825H1252V838H1259V845H1260V851H1264V858H1265V838H1270V831H1272V838H1274V851H1278V858H1281V851H1282V858H1283V838H1286V851H1290V865H1291V845H1294V851H1295V865H1302V851H1303V838H1304V858H1305V865H1306V858H1307V865H1314V858H1316V851H1317L1318 872H1319V858H1320V851H1324L1325 872H1326V858H1327V845H1328V851H1329V865H1332V845H1334V851H1335V865H1344V845H1345V858H1347V865H1348V851H1349V858H1351V865H1353V872L1354 851H1355V858H1359V865H1362V851H1363V865H1365V858H1371L1372 885H1373V872H1376V858H1379L1380 885H1381V872H1382V878H1383V885H1384V865H1385V878H1387V865H1392V858H1396V865H1397V858H1398V878H1400V885H1403V872H1406V858H1408V865H1410V858H1412V878H1414V872H1415V865H1417V858H1418V851H1420V845H1421V838H1423V831L1424 798H1425V818H1426V804H1427V811H1428V804H1429V798L1430 771H1431V778H1432V764H1434V757H1435V751H1436V744H1437V751H1439V744H1440V737H1441V724H1442V717H1445V710H1447V690L1448 717H1449V704H1450V710H1453V690H1457V697H1459V690H1465V704H1470V717H1474V697H1475V710H1477V704H1479V710H1481V717L1482 690H1485V697H1490V710H1491V704H1494V690H1499V697H1502V704H1503V717H1508V704H1509V697H1514V690H1517L1518 717H1519V710H1520V697H1523V704H1524V690H1525V710H1530V704H1531V710H1534V717H1535V704H1536V690H1537L1538 717H1540V710H1545V717H1547V704H1548V710H1550V690H1555V710H1556V697H1557V710H1558V690H1559V697H1560V717L1561 690H1562V710H1563V717H1566V704H1568V717H1569V697H1572V710H1574V690H1579V704H1580V717H1581V710H1583V704H1585V717H1590V710H1591V697H1594V690H1595V704H1601V684L1602 710L1603 684H1606V704H1607V710H1611V704H1613V690H1615V684H1616L1617 710H1623V690H1625V684H1626V704H1628V684H1629V697H1631V690H1633V697H1635V690H1636V697H1638V690H1639V697H1643V710H1646L1647 684L1648 717L1649 690H1653V704H1654V690H1655V697L1656 724H1658V710H1659V724H1661V717H1662V704H1664V710H1665V704H1667V724H1668L1669 697H1674L1675 724H1676L1677 697H1678V710H1680V717H1681V724H1682V710H1685V724H1688V710H1691V697H1696V690H1698V684H1700V697H1701V690H1702" stroke="#c08010" stroke-width="2" fill="none" stroke-linejoin="miter" shape-rendering="crispEdges"/><path d="M254 657H255V650H261V657H262V650H263V657H269V650H270V657H271V650H273V657H274V650H277V657H292V650H293V657H298V650H299V657H304V650H308V657H315V650H317V657H321V650H323V657H332V650H338V657H344V650H345V657H359V650H361V657H363V650H366V657H368V650H369V657H385V650H388V657H394V650H399V657H403V650H421V643H423V650H425V643H430V650H451V643H452V650H458V643H466V650H470V643H473V650H489V643H493V650H495V643H496V650H506V643H507V650H508V637H509V643H513V637H514V643H567V637H568V643H570V637H571V643H574V637H575V643H584V637H587V650H594V643H603V650H604V643H609V650H635V643H636V650H650V643H653V650H659V643H670V650H673V643H674V650H682V643H686V650H688V643H690V650H703V643H704V650H724V643H726V650H735V643H737V650H738V643H739V650H748V643H752V650H765V643H766V650H768V643H771V650H772V643H773V650H776V643H777V650H779V643H784V650H790V643H791V650H797V643H799V650H800V643H802V650H804V643H806V650H809V643H813V650H820V643H823V650H827V643H828V650H831V643H832V650H836V643H837V650H857V643H860V650H870V643H871V650H885V643H890V650H896V643H897V650H899V643H900V650H921V643H925V650H942V643H945V650H953V643H972V637H973V643H1010V637H1011V643H1015L1016 690L1017 717L1018 744H1019V764H1020V778L1021 804L1022 845H1023V865H1024V872H1026V858H1030V851L1031 878H1032V885H1035V865H1036V878H1037V872H1039V885H1040V872H1044V892H1045V885H1047V872H1049V885H1050V878H1051V872H1055V878H1056V885H1058V878H1062V858H1065V845H1066V831H1067V818H1068V811H1069V798H1071V791H1072V798H1073V791H1076V784H1077V778H1078V771H1080V778H1081V771H1083V757H1084V764H1086V757H1089V751H1091V744H1094V737H1097V731H1099V724H1102V717H1104V710H1105V704H1107V710H1108V704H1111V697H1112V690H1114V684H1116V677H1117V684H1118V690H1119V684H1120V670H1125V664H1128V657H1131V650H1134V643H1137V637H1138V630H1143V623H1146V617H1147V623H1148V643H1149V623L1150 650H1151V670L1152 704H1153V724H1155V744L1156 791H1157L1158 764H1159V771H1161L1162 798L1163 771H1164V778H1167V798H1169V804H1175V811L1176 784H1179V804H1182V811H1183V798H1188V791H1193V811H1195V798H1196V804H1199L1200 825H1203L1204 798H1207V811H1209V798L1210 831H1212V825H1213V811H1217V831H1219V825H1220V811H1224V831H1229V818H1230V825H1233V838H1234V825H1235V831H1236V825H1237V838H1239V818L1240 845H1241L1242 818H1246V838H1247V845H1249V825H1250V838H1252V851H1254V845H1261V858H1263V845H1268V851H1270V858H1271V865H1272V851H1273V865H1274L1275 838H1277V845H1278V838H1280V858H1283V865H1284V845H1286V851H1289V858H1290V865H1291V858H1292V845H1293V858H1295V845H1296V865H1297V845H1298V851H1300V865H1303V858H1304V865H1308V851H1309V865H1311V851L1312 872H1317V865H1321V845H1323L1324 872H1325V865H1329V872L1330 851H1336V845H1337V851H1341V858H1347V851H1348V858H1349V865H1354V878H1365V865H1371V872H1372V865H1373V872H1375V858H1377V865H1378V858H1383V878H1388V858H1391V872H1392V885L1393 858L1394 885L1395 858H1397V878H1399V865H1400V878H1402V885H1404V878H1408V885H1410L1411 858H1412V878H1413L1414 851H1416V845H1417V831H1418V838H1419V831H1420V825H1421V818H1422V811H1423V804H1424V811H1425V804H1426V784H1428V778H1431V771H1432V784L1433 751H1435V771H1436V764L1437 731H1438V724H1439V731H1440V724H1441V737H1442V731H1443V724H1444V717H1448L1449 690H1451L1452 717H1453L1454 690H1455V697H1457V690H1459V704H1462V690H1464V710H1469V704H1470V717H1478V710H1482V717H1485V710H1487V704H1488V697H1489V717H1493V704H1495V697H1497V690H1499V710H1505V690H1507V697H1510V704H1511V710H1517V690H1523V704H1524V710H1525V697H1526V690H1527V710H1531V717H1533V704H1534V697H1535V710H1536V690H1538V710H1544V690H1546V704H1547V717H1551L1552 690H1553V697H1554V710H1558V717H1562V697H1565V704H1567V697H1572V710H1577V717L1578 690H1579V704H1580V690H1586L1587 717H1588V704H1591V697H1593V710H1595V690H1596V684H1597V677H1599L1600 704H1606V690H1618V677L1619 704H1622V697H1623V690H1624V697H1627V704H1629V697H1631V704H1632V684H1634V697H1635V704H1639L1640 677H1644V684H1645V704H1646V690H1647V710H1650V717H1651V710H1652V704H1653V697H1655V690H1656V710H1658V717H1659V710H1660V704H1662V690H1671V704H1672V710H1675V717H1683L1684 690H1685V710H1689V697H1690V710H1691V717H1692V704H1695V710H1696V704H1699V697H1701V690H1702" stroke="#8010c0" stroke-width="2" fill="none" stroke-linejoin="miter" shape-rendering="crispEdges"/><path d="M254 664H255V657H256V664H261V657H270V664H275V657H288V664H291V657H293V664H294V657H297V664H305V657H311V664H312V657H314V664H319V657H320V664H323V657H324V664H325V657H327V664H333V650H334V664H338V657H362V664H367V657H368V664H381V657H382V664H383V657H385V664H387V657H393V664H397V657H400V643H401V650H405V643H406V650H413V657H416V650H422V657H424V650H427V657H428V664H429V650H433V657H434V650H437V657H438V650H441V657H448V650H450V657H452V650H455V657H457V650H462V657H468V650H476V657H482V650H485V657H486V650H494V657H496V650H498V657H501V643H502V650H505V643H507V650H508V643H513V650H517V643H523V650H524V643H525V650H529V643H531V650H532V643H535V650H538V643H557V650H558V643H566V650H568V643H570V657H573V650H577V643H582V650H585V643H590V650H592V643H593V650H594V657H599V650H600V657H603V650H610V657H612V650H619V664H621V657H625V650H626V657H627V664H628V657H629V650H630V657H638V650H650V657H654V650H657V657H659V650H662V657H668V650H672V657H680V650H683V657H694V650H697V657H700V643H702V657H703V650H706V657H710V650H713V657H717V650H718V664H719V657H722V650H726V657H730V650H731V657H734V650H735V657H736V650H760V657H762V650H764V664H770V657H777V643H778V657H784V650H787V657H788V650H796V657H797V650H806V657H810V650H813V657H815V650H819V657H821V650H826V657H828V650H829V657H831V650H832V657H834V650H839V657H840V650H845V657H846V650H849V643H850V650H851V657H852V650H861V657H864V650H865V657H869V650H870V657H872V650H876V657H878V650H885V657H889V650H890V643H894V650H904V657H909V650H910V657H916V650H927V657H932V650H933V657H934V650H936V657H943V650H944V657H945V650H947V643H950V650H952V643H955V650H957V637H959V643H960V637H963V643H966V637H967V643H972V637H976V650H977V637H980V643H981V637H983V643H984V637H985V643H990V637H991V643H993V637H999V643H1004V637H1005V643H1006V637H1009V643H1015L1016 704H1017V717L1018 751H1019V771L1020 811L1021 838L1022 865H1023V851H1024V845L1025 872H1027V858H1029V865H1032V872H1035V878H1036V885H1039V865H1043V885H1045V892L1046 865H1050L1051 892H1054V872H1055V865H1056V885H1058V865H1060L1061 892H1062V878L1063 851H1064V845H1065V831H1066V825H1067V811H1068V791H1069V784H1071V778H1072V791H1074V778H1076V771H1079V764H1081V757H1084V751H1088V744H1089V737H1092V731H1097V724H1098V717H1100V710H1102V704H1103V710H1105V704H1106V697H1108V690H1111V684H1112V690H1114V684H1117V670H1120V664H1122V657H1123V664H1125V657H1126V650H1132V643H1135V637H1136V630H1138V623H1141V617H1143V623H1144V617H1146V610H1147V623H1148V637L1149 670H1150V690H1152V710L1153 731H1154V751H1155V771H1157V791H1158V798H1163V804H1165V798H1168V791H1172V804H1177V818H1181V825H1183V818H1184V798H1190V818H1191V825H1194L1195 804H1196L1197 831H1201V825L1202 804H1204V818H1206V811H1207V831H1209V811H1210V825H1215V838H1217V825H1220V831H1221V818H1222V811H1223V818H1227V831H1228V845H1229V831H1233V818H1234V825H1235V838H1241V831H1244V838H1250V845H1258V851H1259V845H1260V838H1263L1264 865L1265 838H1266V858H1270V865H1274V858H1275V872H1289V858H1291V845L1292 872H1295L1296 851L1297 872H1298V858H1300V872H1303V878H1304V872H1305V858H1306V865H1307V878H1308L1309 851H1310L1311 872H1312V865H1313V872H1315V878H1319V858H1322V878H1324V858H1334V872H1335V865H1336V858H1338V865H1339V878H1340V865H1341V858H1342V865H1344V851L1345 878H1347V865H1349V878H1350V872H1354V878H1359V872H1360V858H1362V865H1366V885H1368L1369 858H1370V872H1379V892H1381V878H1382V885H1383V878H1389V892H1390V878H1391V892H1394V872H1395V885H1397V872H1398V878H1403V885H1404V872H1405V878H1406V885H1407V865H1410V878H1411V872H1412V858H1413V872H1414V865H1415V858L1416 825H1418V818H1419V811H1420V804H1421V798H1422V791H1424V784H1426V778H1427V771L1428 798H1429V791H1430V778H1431V784H1432V771H1434V764H1436V757H1437V751H1438V744H1439V737H1441V731H1442V717H1443V710H1444V704H1448V710H1449V690H1453V704H1461V690L1462 717H1467V704H1468V697H1469V690H1470V710H1471V717H1475V710H1480V704H1486V710H1490V717H1491V704H1492V690H1493V697H1495V704H1496V690H1504V697H1509V690H1511L1512 717H1514V697H1515V717H1516V697H1519V690H1522V710H1524V697H1527V717H1529V697H1530V717H1533V710H1534V690H1535L1536 717H1537V710H1540V690H1541V697H1546V704H1551V690H1554V710H1558V697H1561V704H1562V717H1564V697H1567V717L1568 690H1573V704H1575V690H1576V710H1582V697H1583V690L1584 717H1585V710H1586V717H1587V704H1588V697H1590V710H1593V704H1594V697H1596V677H1599V684H1601V690H1603V704H1604V690H1605V684H1607V704H1608V684H1611V704H1616V697H1618V677H1619V684H1622V677H1623V684H1625V677H1628V697H1629V684H1633V690H1635V684H1638V697H1640V677H1643V684H1644V704H1648V690H1649V697H1651V717L1652 690H1653L1654 717H1655L1656 690H1657L1658 717H1659V697H1660V717H1662V697H1668V704H1669V690H1670L1671 717L1672 690H1673V710H1674V717H1676V704H1677V690L1678 717H1685V704H1686V710H1689V717H1690V704H1691V697H1693V690H1694V710H1695V704H1696V710H1697V704H1698V697H1702" stroke="#a0e010" stroke-width="2" fill="none" stroke-linejoin="miter" shape-rendering="crispEdges"/><path d="M254 677H256V670H258V677H260V670H262V677H264V670H265V677H266V670H267V677H269V670H275V677H279V670H284V677H288V670H290V677H293V670H295V677H298V664H300V677H303V670H304V677H314V670H321V677H324V670H326V677H327V670H336V677H340V670H342V684H343V677H348V670H349V677H351V670H362V677H368V670H373V677H381V670H383V677H384V670H387V677H388V670H390V677H393V670H395V677H396V664H399V677H401V664H403V670H404V664H405V670H406V664H415V670H425V664H428V670H434V664H438V670H440V664H446V670H447V664H448V670H451V664H457V677H458V670H464V664H465V670H470V664H475V670H476V664H482V670H488V664H492V670H494V664H505V670H506V664H508V657H515V664H516V657H519V664H522V657H523V664H527V657H528V664H539V657H544V664H549V657H553V664H568V657H569V664H571V657H575V664H578V657H582V664H583V657H585V664H592V670H595V664H596V670H600V677H604V670H606V664H610V670H611V664H619V670H620V664H624V670H626V664H628V670H632V664H633V670H636V664H637V670H645V664H651V670H653V664H663V657H667V664H677V670H680V664H681V670H689V664H690V670H695V664H696V670H698V664H699V670H702V664H703V670H714V657H715V664H717V670H718V664H724V670H725V664H732V670H739V664H741V670H745V664H746V670H753V664H754V670H756V664H758V670H759V664H764V670H772V677H774V670H775V664H779V670H783V664H786V670H789V664H793V670H808V664H813V670H816V664H817V670H821V664H824V670H834V664H836V670H841V664H843V670H849V664H855V670H856V664H863V670H866V664H871V670H872V664H875V670H877V664H879V670H891V664H892V657H895V670H896V664H897V670H898V664H902V670H904V664H908V670H914V664H915V677H916V670H919V664H923V670H925V664H930V670H934V664H935V670H937V657H939V670H951V664H953V657H955V664H958V657H959V664H960V657H963V664H964V657H965V664H967V657H968V664H969V657H975V664H976V657H977V664H978V657H982V664H984V657H987V664H991V657H998V664H1001V657H1002V664H1004V657H1006V664H1011V657H1013V664H1015V684H1016V697H1017V717L1018 744L1019 771L1020 798L1021 825H1022V831H1024V838H1026V845H1028V838H1029V825H1030V845H1033V851H1035V845H1036V858H1037V865H1039V858H1040V851H1042L1043 872H1053V858H1054V851H1055V845H1059V858H1061V872L1062 845H1063V831H1065V818H1066V804H1067V791H1068V798H1069V791H1071V784H1074V778H1076V764H1081V751H1082V757H1084V751H1086V744H1087V737H1088V744H1089V737H1092V731H1095V724H1097V717H1100V710H1103V704H1105V697H1106V690H1107V697H1108V690H1109V697H1111V684H1114V677H1117V670H1118V664H1119V670H1120V664H1123V657H1126V650H1129V637H1131V643H1132V637H1133V630H1135V623H1138V617H1139V623H1141V617H1142V610H1144V596H1145V603H1147V623L1148 664H1149V684H1150V677L1151 710L1152 737H1153V744H1154V764L1155 791H1156V778H1159V784H1160V778H1164V784H1168V778L1169 804H1173V791H1175V811H1180V798H1182V804H1183V811H1184L1185 784H1187V791H1188L1189 818H1191L1192 791H1196V798H1197V791H1198L1199 818H1200V811H1201V818H1202V798H1205V804H1206V818H1209V804H1210V818H1211V811H1213V798H1214V811H1215V831H1217V818H1218V825H1219V818H1220V804H1221V818H1222V811H1223V804H1224V818H1225V831H1226V811H1227V818H1231V831H1233V811H1235V825H1237V831H1239V818H1241L1242 845H1244V825H1245V838H1246V825H1247V838H1248V831H1249V838H1250V831H1251V838H1254V845H1261V851H1263V831H1265V845H1266V851H1271V831H1274L1275 865H1278V851H1281V845H1285V851H1286V845H1289V858H1292V838H1293V851H1297V865H1301L1302 838H1303V858H1307V838H1308V845H1309V851H1315V865H1319V845H1323V838H1324V851H1326V838H1331V851H1333V865H1341V845H1342V851H1345L1346 872H1349L1350 845H1353V858H1365V872H1372L1373 851H1376V858H1377V878L1378 851L1379 878H1380V885H1382V878H1388V885H1389L1390 858H1391V878H1392V858H1393L1394 885H1396V878H1398V885H1402V865H1406V885H1408L1409 858H1412V851H1413V845H1414V838H1415V831H1417V838H1418V831H1419V811H1420V798H1421V791H1425V784H1426V778H1427V798H1428V791H1430V784H1431V778H1432V771H1433V764H1434V751H1435V737H1436V731H1437V724H1438V737H1439V731L1440 710H1442V704H1443V710H1446V690H1447L1448 717H1449V710H1452V690H1453V710H1457V690H1460V710H1462V704H1463V690H1464V710H1465V697H1466V704H1468V690H1471V710H1475V697H1477V690H1479V710H1480V704H1481V697H1482V710H1485V697H1491V717H1492V697H1496V704H1497V690H1503L1504 717H1506V704H1507V710H1509V717H1514V704H1517V697H1519V710H1520V690H1522V704H1525V697H1526V717H1527V704H1528V717H1529V704H1531V697H1532V710H1537V717H1538V697H1539V704H1541V690H1543V697H1544V690H1546V710H1548V697H1549V704H1553V710H1554V717H1556V697H1557V710H1564V697H1566V704H1567V710H1569V697H1570V690H1571V710H1572V690H1576V704H1579V697H1581V717H1582V704H1584V717H1587V704H1588V697H1589V690H1590V710H1592V704H1593V690H1594V684H1598V697H1599V677L1600 704H1601V690H1604V697H1607V677H1608V684H1609V704H1612V697H1614V677H1616V697H1617V704H1621L1622 677H1625V690H1627V677L1628 704H1630V690H1632V677H1635V690H1639V697H1640V704H1642V697H1646V710H1648V717H1658V697H1660V690H1663V704H1664V697H1665V717H1666V710H1667V717H1668L1669 690H1670L1671 717H1676V710H1678V704H1679V697H1680V690H1681L1682 717L1683 690H1685V710H1691V690H1693V710L1694 684H1695L1696 710L1697 684H1699V697H1702V690" stroke="#1080c0" stroke-width="2" fill="none" stroke-linejoin="miter" shape-rendering="crispEdges"/><path d="M254 670H256V677H261V670H269V677H272V670H280V677H285V670H292V677H294V684H295V677H296V670H297V677H300V670H301V677H303V670H304V677H305V670H306V677H307V670H311V677H317V670H324V677H325V670H329V677H335V670H339V677H341V670H347V677H353V670H354V677H359V670H362V677H365V670H368V677H373V670H375V677H379V670H383V677H388V670H390V677H397V670H398V677H399V670H400V664H403V670H409V664H411V670H415V664H417V670H426V664H427V670H429V664H433V670H434V664H435V670H437V664H447V670H451V664H452V670H458V664H459V657H460V670H464V664H470V670H478V664H481V670H483V664H496V657H498V670H501V664H504V670H505V657H507V664H510V670H515V657H522V664H523V657H526V664H530V657H533V664H541V657H552V664H557V657H558V664H573V657H575V664H576V657H579V664H585V670H589V664H591V670H597V664H603V670H616V664H618V670H619V664H621V670H624V664H631V670H632V664H635V670H637V664H639V670H645V664H649V670H650V664H655V657H658V670H661V664H662V670H665V664H667V670H674V664H683V670H685V664H687V670H690V664H691V670H693V664H697V670H700V664H702V670H705V664H707V670H711V664H716V670H717V664H721V670H724V664H725V670H733V664H740V670H750V664H758V670H759V657H767V677H768V664H772V670H775V664H777V670H782V664H792V677H794V664H799V670H800V664H801V670H807V664H808V670H812V664H813V670H816V664H821V670H823V664H829V670H831V664H832V670H842V664H843V670H845V664H849V670H856V664H862V670H865V664H866V670H869V664H870V670H871V664H887V670H888V664H889V670H890V664H899V670H900V664H910V670H911V664H918V677H919V664H922V670H924V677H926V664H930V670H934V664H936V670H940V664H943V670H944V664H946V670H950V657H959V664H965V670H968V664H969V657H971V664H976V657H977V664H978V657H980V664H982V670H984V664H997V657H1005V664H1013L1014 690H1015V704H1016L1017 731H1018V751L1019 778L1020 804H1022L1023 831H1024V825H1026V831H1027V838H1029V825H1030V845H1031V831H1032V845H1034V851H1036V858H1037V845H1042V858H1046V845H1047V858H1049V851H1050V838H1057V851H1058V831L1059 858H1061V851H1063V845L1064 811H1065L1066 784H1068V791H1069V784H1070V778H1072V784H1073V778H1075V771H1076V764H1077V771H1078V764H1079V757H1080V751H1083V744H1086V737H1088V731H1092V724H1094V717H1095V724H1096V717H1097V710H1099V704H1105V697H1108V690H1110V684H1111V677H1113V670H1117V664H1119V657H1120V664H1122V657H1124V650H1125V643H1127V650H1128V643H1129V637H1131V630H1132V637H1134V630H1137V623H1138V617H1140V610H1141V623H1142V610H1146V617L1147 643L1148 664H1149V684H1150V704H1151V724L1152 751H1153V771H1155V778L1156 757L1157 784L1158 757H1159V764H1160V771H1164V764H1165V771H1167V778H1168V791H1169V778H1170V784H1171V778H1173V798H1177V804H1181V784H1188V804H1190V811H1196V791H1197V798H1198V804H1204V811H1208V818H1209V804H1211V791H1213V804H1214V798H1217V818H1218V825H1222V811H1223V798H1226V804H1227V818H1228V798H1230V804H1232V811H1234V825H1235V818H1239V831H1240V818H1243V838H1249L1250 811H1252V831H1253V818H1257V838H1260V831H1261V838H1262V831H1264V818H1265V825H1266L1267 851H1268V845H1270V831H1272V845H1276V825H1278V831H1281V838H1284V851H1286V831H1289V851H1290V831H1294V845H1295V858H1296V851H1297V858H1299V845H1302V851H1303V858H1305V851H1308V845H1310V851H1312V831H1313V845H1319V838H1322V831L1323 858H1324V851H1327V838H1329V851H1330V838H1337V851H1339V845H1340V838H1352V851H1355V845H1356V851H1357V865H1359V858H1363V865H1369V872H1370L1371 845H1378V865H1379V845H1380L1381 872H1384L1385 851H1386V858H1390V878H1391V865H1398V851H1400V858H1401V878H1402V858H1403V865H1404V878H1405V872H1406V878H1408L1409 851H1410V845H1411V838H1413V831H1414V845H1415V838H1416V831H1417V825H1419V818H1420V811H1421V804H1423V798H1425V791H1426V771H1429V757L1430 778H1431V771H1432V764H1433V757H1435V751H1436V744H1437V737L1438 710H1439V704H1440V717H1441V710H1443V704H1445V684H1448V704H1459V684H1460V690H1462V710H1463L1464 684H1467V697H1470V690H1475V684L1476 710H1478L1479 684H1483V697H1488V710H1489V697H1490V704H1491V697H1493V710H1494V690H1496V710H1497V697H1499V690H1503V704H1509V684H1510V697H1513V690H1515V704H1517V684H1522V690H1524V704H1532V684H1533V704H1535V684H1539V690H1540V710H1542V690H1544V684H1545L1546 710H1547V690H1548V704H1550V697H1554V684H1555V704H1556V684L1557 710H1562V704H1565V710H1567V697H1580V704H1581V710H1583V697H1585V684H1586V697H1588V690H1591V684H1593V697H1596V690H1598V697H1599V690H1600V684H1601V677H1602V690H1603V704H1605V697H1606V677H1613L1614 704H1619L1620 677H1621L1622 704H1629V690H1630V677H1631V684H1634V697H1635V677H1636V697H1643V677H1644V684H1645V690H1646V704H1647V710H1651V690H1659V710H1661V697H1663V690H1664V710H1665V690H1666V697H1669V717L1670 690H1671L1672 717H1673V710H1674V697H1675V704H1682V717H1685V710H1689V717L1690 690H1691V704H1692V697H1693V710H1694V704H1696V690H1697V684H1698V690H1700V670H1702V664" stroke="#108010" stroke-width="2" fill="none" stroke-linejoin="miter" shape-rendering="crispEdges"/><path d="M254 677H261V670H263V677H267V670H268V677H269V670H270V677H275V670H276V677H279V670H281V677H286V670H295V677H297V670H298V677H300V670H303V677H307V664H308V670H311V677H315V670H319V677H325V670H331V677H332V670H341V677H342V670H346V677H348V670H356V677H362V670H363V677H364V670H365V677H367V670H371V677H372V670H374V677H375V670H376V677H377V670H380V677H381V670H383V677H390V670H393V677H395V670H399V664H401V670H404V677H405V664H407V670H409V664H412V670H414V664H417V670H419V664H422V670H424V664H427V670H440V664H444V670H449V664H454V670H455V664H457V670H463V664H465V670H466V664H471V670H474V677H476V664H480V670H482V664H483V670H490V664H500V670H501V664H505V657H519V664H521V657H526V664H550V657H551V664H554V657H557V664H564V657H566V670H567V650H570V664H577V670H580V657H583V664H586V670H591V664H607V670H608V657H609V664H611V677H612V670H613V664H617V670H618V664H620V670H636V664H639V670H640V664H643V670H649V664H653V670H654V664H655V670H660V664H670V670H673V664H677V677H682V670H689V664H691V670H694V664H706V670H709V664H712V670H716V664H723V670H730V664H731V670H733V664H734V670H735V664H745V670H751V664H766V670H767V664H773V670H774V664H777V670H783V664H789V670H794V664H797V670H801V664H806V670H807V664H808V670H809V664H812V670H815V664H820V670H824V677H827V670H829V664H830V670H833V664H841V670H842V664H848V670H849V664H853V670H855V664H860V670H862V664H866V670H868V664H872V670H873V664H875V670H885V664H887V670H890V664H895V670H896V664H901V677H902V670H903V664H910V670H911V657H915V664H917V677H918V664H919V670H922V664H930V670H932V664H935V670H938V664H942V670H946V650H948V643H949V637H952V643H953V637H954V643H955V630H956V637H959V643H965V637H970V643H971V637H976V643H978V637H991V643H993V637H998V643H1002V637H1005V643H1007V637H1008V643H1009V637H1012L1013 664L1014 690H1015V710H1016V724H1017V744H1018V764L1019 804H1022V811H1024V818H1025V811H1026V818H1027V825H1029V831H1032V838H1033V825H1039V818H1041V838H1049V825H1052V831H1060V825H1061V811H1062V825H1063V818H1064V804H1065V791H1067V784H1070V778H1071V771H1073V764H1075V771H1076V751H1078V744H1080V751H1081V744H1083V737H1086V731H1088V737H1089V731H1091V724H1093V717H1094V710H1097V704H1102V697H1104V690H1105V684H1111V677H1114V664H1119V657H1122V664L1123 643H1129V637H1130V630H1131V637H1132V623H1134V630H1135V623H1138V617H1141V610H1144V617H1145V603L1146 630H1147V650H1148V664H1149V684H1150V704L1151 731H1152V751H1153V771H1156V751H1157V757H1158L1159 778H1160V771H1162V764H1163V778H1165V764H1167V784H1171V791H1172V778H1177V784H1178V798H1181V778H1184V784H1185V791H1186V804H1187V784H1188V791H1189V798H1190V778H1194V791H1195V798H1196V778H1199V784H1205V791H1208V804H1210V791H1211V804H1213V818H1214V804H1215V818H1217V798H1218V791H1220V798H1221V804H1223V811H1225V818H1226V825H1232V818H1234V804H1236V798H1237V818H1238V811H1240V804H1246V811H1247V818H1249V825H1251V818H1254V838H1257V825H1260V818H1262V825H1264V818H1265L1266 845H1271V825H1272V845H1273V831H1275V851H1280V838H1281V831H1282V838H1284V845H1285V825H1287V831H1294V845H1298V838H1299V831H1305V838H1306V825L1307 851H1312V845H1313V825H1314V845H1320V831H1322V838H1326V825L1327 851H1330V845H1332V825H1333V838H1334V858H1342V838H1343V858H1344L1345 831H1349L1350 858H1351V845H1352V858H1355V845H1358V865H1359V851H1360V845H1361V858H1362V845H1363V838H1364V845H1365V865H1366V858H1367V851H1369V865H1373V851H1376V865H1377V845H1378V851H1379V865H1380V858H1382V845H1385V851H1387V865H1389V858H1394V865H1395V858H1397V845H1398V851H1400L1401 872H1403L1404 845H1405V858H1409V851H1410V845H1412V851H1413V845H1414V838H1415V831H1416V818H1417V825H1418V818L1419 784H1421V778H1422V798H1423V791H1424V784H1425V771H1426V757H1428V751H1429V744H1431V751H1432V757H1433V751L1434 724H1435V731H1436V717H1437V724H1438V717H1439V710H1441V697H1443V690H1447V684H1448V697H1449V704H1450V710H1451L1452 684H1457V690H1459V697H1461V704H1466V710H1469V704H1470V710H1474V690H1477V684H1478V697H1484V684H1486V704H1487V697H1488V684H1492V690H1497V697H1499V710H1502V697H1507V690H1508V697H1509V704H1510V710H1516L1517 684H1520V704H1530V690H1531V704H1533V697H1540V690H1543V710H1544L1545 684H1549V697H1553V704H1555V697H1559V710H1564V704H1567V710H1574V704H1575V710L1576 684H1577V704H1578V697H1580V704H1582V690H1584V684H1587V677H1589L1590 704H1591V690H1592V670H1593V690H1596V684H1597V670L1598 697H1599V684H1601V670H1608V690H1610V684H1612V690H1614V677H1616V684H1618V690H1620V697H1625V677H1629V690H1630V677H1640V684H1644V704H1645V684H1646V690H1647V710L1648 684H1649V690H1651V684H1653L1654 710H1655L1656 684H1657V704H1661V684H1662V690H1665V697H1672V690H1674V704H1683V710H1686V697H1687V704H1689V684H1691V690H1692V684H1694V677H1695V670H1699V690H1700V684H1702" stroke="#d01010" stroke-width="2" fill="none" stroke-linejoin="miter" shape-rendering="crispEdges"/><path d="M254 670H256V664H263V670H265V664H268V670H271V664H274V670H277V664H281V670H283V664H284V677H286V670H288V664H292V670H297V664H302V670H309V664H310V670H313V664H314V670H317V664H322V670H324V664H328V670H329V664H333V677H335V670H336V664H344V670H348V664H350V670H354V664H355V670H357V664H368V670H372V664H374V670H377V664H400V670H402V657H409V664H411V670H412V664H415V657H416V664H419V657H424V664H427V657H429V664H433V657H440V664H444V657H455V664H464V657H466V664H475V657H478V664H481V657H484V664H488V657H494V664H503V657H504V664H507V657H511V650H514V657H518V650H525V657H527V650H536V657H543V650H552V657H555V650H560V657H572V650H573V657H575V650H579V657H580V650H583V657H594V664H596V657H605V664H618V657H619V664H623V657H625V664H628V657H633V664H634V657H643V664H648V670H649V664H650V657H651V664H666V670H667V664H670V650H677V664H678V657H679V664H680V657H687V670H688V657H693V664H696V657H707V664H712V657H714V664H722V657H729V664H746V657H749V664H755V657H759V650H762V657H763V664H768V657H773V664H774V657H776V664H778V657H780V664H784V657H790V664H791V657H794V650H798V664H803V657H814V664H817V657H819V664H822V657H829V664H830V657H834V664H836V657H838V670H839V664H842V657H844V664H849V650H854V664H855V657H857V664H858V657H861V664H864V657H865V664H867V657H870V664H875V657H877V664H886V657H891V664H893V657H894V664H895V657H897V664H898V657H900V664H905V657H915V664H926V657H927V670H928V657H932V664H935V657H937V664H946V657H947V670H948V664H951V657H952V650H954V657H962V650H967V657H968V650H969V657H971V650H973V657H974V664H975V657H981V650H997V657H999V650H1003V657H1007V650H1010V643H1015V650L1016 690L1017 717H1018L1019 744L1020 771L1021 811H1022V831H1023V838H1025V845H1029V831H1030V838H1031V851H1032V865H1034V858H1036V851L1037 872H1038V878L1039 851H1046V865H1047V878H1051V872H1057V858H1060V865H1061V851H1062V865H1063V851H1064V838H1065V825H1066V818H1067V804H1068V791H1071V784H1073V791H1074V778H1075V771H1078V778H1079V771H1080V764H1082V757H1083V764H1084V757H1085V751H1086V744H1089V737H1092V731H1095V724H1097V717H1102V704H1104V710H1105V704H1108V697H1111V690H1113V684H1114V690H1116V677H1117V670H1120V664H1122V657H1123V664H1124V657H1126V650H1128V657H1129V650H1132V643H1134V637H1138V630H1141V623H1142V617H1143V623H1144V617H1146V610H1147V617H1148L1149 643L1150 664H1151V677L1152 704H1153V724L1154 757H1156L1157 778H1158V784H1159V791H1161V784H1163V771H1165V791H1166V798L1167 771H1168V778H1171V798H1174V784H1175V804H1181V811H1182V804H1185V811H1186V804H1192V791H1193V811H1194V791H1195V798H1198V791H1199V798H1200V811H1201V791H1204L1205 818H1206V811H1207V798H1208V818H1209V825H1210L1211 798H1212V804H1214V818H1216V804H1218L1219 825H1220L1221 804H1222L1223 825H1224V831H1225V811H1227V825L1228 804L1229 831H1233V811H1234V825H1236V831H1237V838H1240V831H1242V818H1246V825H1247V838H1248V825H1254V845H1255V831H1256V845H1258V851H1264V845H1270V851H1274V831H1276V851H1277V858H1279V845H1281V851H1283V838H1284V831H1285V838H1286V851H1290V858H1292V845H1302V851H1303V845H1305V851H1309V865H1310L1311 838H1315V845H1319V858H1324V845H1329V865H1331V845H1334V865H1339V851H1340V838H1342V858H1343V851H1346V845H1347V851H1350V845H1352V858H1354V872H1355V858H1357V845H1359L1360 872H1361V858H1363V851H1364L1365 872H1370V858H1375V878L1376 851H1384V858H1385V872H1387V878H1388V872H1390V865H1394V872H1395V878H1397V858H1399V872H1400V878H1403V872H1404V858H1409V878H1411V865H1413V872L1414 845H1415V851H1416V845H1418V838H1420V825H1421V818H1424V811H1425V798H1426V791H1427V798H1428V784H1429V778H1430L1431 757H1432V751H1434V771H1435V764H1436V757H1437V751H1438V744H1439V737H1440V731H1441V724H1442V717H1443V710H1447V690H1448V710H1449V697H1452V690L1453 717H1455V710H1459V717H1460V710H1464V697H1467V690H1470V697H1476V690H1479V697H1480V717H1481V697H1482V690H1486V710H1493V697H1495V704H1499V690H1500V704H1502V717H1503L1504 690L1505 717H1507V697H1508V717H1513V704H1517V697H1519V717H1521V697H1523V704H1524V717H1526V704H1529V690H1539L1540 717H1541L1542 690H1543V710H1546V717H1548V710H1550V704H1552V710H1557V717H1563V704H1564V697H1565V710H1567V690H1568L1569 717H1570V704H1571V697H1572V704H1574V697H1575V717H1576V697H1578V717L1579 690L1580 717H1583V704H1584V710H1586V704H1590V684H1593V704H1594V684H1596V690H1597V697H1598V684H1600V690H1602V684H1608V704L1609 677H1610V690H1611V684H1614V677H1616V690H1617V704H1621V684H1625V704H1627V684H1636V704H1637V690H1643V704H1645V710H1647V704H1648V710H1649V717H1650V704H1652V710H1655V717H1657V697H1658V704H1659V717L1660 690H1661L1662 717H1663L1664 690H1665V710H1667V717H1671V704H1672V697H1673V704H1674V690H1675V697H1677V717H1681V697H1686V704H1687V690H1689V704H1692V717H1694V704H1695V697H1698V677H1699V690H1700V684H1701V670H1702" stroke="#606060" stroke-width="2" fill="none" stroke-linejoin="miter" shape-rendering="crispEdges"/><path d="M254 670H257V664H258V670H264V664H266V657H272V664H273V670H275V664H276V670H277V664H278V670H280V664H284V670H285V664H289V670H291V664H294V670H302V664H314V670H321V664H323V677H324V670H327V664H334V670H336V664H343V670H345V664H347V670H349V664H354V670H369V664H372V670H374V664H379V670H384V664H387V677H390V670H394V664H398V657H399V664H400V657H402V664H410V657H411V664H413V657H414V664H415V657H416V664H417V657H419V664H421V670H423V657H424V664H425V657H427V664H428V657H430V664H433V657H435V664H443V657H444V664H446V657H449V664H450V657H451V664H454V657H456V664H458V657H461V664H462V657H467V664H484V650H485V664H486V657H487V664H490V670H492V657H500V664H502V657H504V664H506V657H507V650H514V657H518V650H521V657H523V650H525V657H530V650H537V657H541V650H546V657H553V650H558V657H559V650H566V657H568V650H570V657H573V650H574V657H576V650H578V657H579V650H580V664H581V650H583V657H584V643H585V657H592V650H595V657H596V664H601V657H602V664H604V657H605V664H607V657H608V664H610V657H620V664H629V657H631V664H636V657H650V664H667V657H668V664H672V657H673V664H683V657H685V664H690V657H694V670H695V664H697V650H699V664H703V657H706V664H711V657H717V650H719V664H721V657H725V650H727V664H729V657H730V664H732V657H742V664H751V657H762V664H763V657H765V664H774V657H789V664H793V657H794V664H795V657H796V650H797V657H803V664H819V657H820V664H821V657H824V664H825V657H828V664H837V657H841V664H843V657H845V664H846V657H860V664H861V657H862V664H866V657H867V650H871V664H873V657H874V664H879V657H882V664H883V657H885V664H887V657H891V664H894V657H898V664H901V657H905V664H908V657H928V664H929V670H932V664H940V657H948V650H965V643H966V650H967V643H970V650H972V643H980V650H982V643H985V650H987V643H989V650H990V643H992V650H993V643H999V650H1001V643H1006V650H1015V643L1016 664L1017 690H1018V704H1019V724L1020 751L1021 778L1022 818H1023V838H1024V845H1028V865H1029V858H1030V851H1032V858H1035V872L1036 851H1038L1039 885H1040V878H1043V872H1044V865H1049V878H1050V872H1051V865H1053V885H1056V865H1057V858H1059V872H1062V865H1063V858H1064V851H1065V845H1066V838H1067V825H1068V811H1069V798H1072V791H1073V784H1074V791H1076V784H1077V778H1079V771H1081V764H1082V771H1083V764H1086V751H1087V757H1088V751H1089V744H1091V737H1094V731H1097V724H1099V717H1102V710H1103V717H1105V704H1106V710H1107V704H1108V697H1109V704H1111V697H1113V690H1114V684H1115V690H1116V684H1119V677H1122V670H1125V664H1128V650H1134V637H1135V643H1136V630H1140V623H1145V617H1147V623H1148V637H1149V650H1150V670H1151V677L1152 704H1153V724H1154V744H1155V764H1156V784H1157V804H1158V798H1160V778L1161 804H1166V811H1167V818H1168V811H1169V818H1174V798H1175V804H1176V818H1180V825L1181 804H1185V798H1188V818H1189V825H1190V811H1191V818H1197V831H1201V818H1202V825H1203V831H1204V825H1205V811H1211L1212 838H1214V818H1217V825H1220V845H1226V825H1227V838H1229V845H1230V831H1233V845H1236V825H1237V831H1238V851H1239V831H1241V845H1243V858H1247V851H1248V845H1249V851H1253V858H1256V865H1257V845H1258V851H1261V838H1263V845H1265V851H1266V865H1267V851L1268 872L1269 851H1272V858H1277V865H1280V858H1284V865H1285V872H1286L1287 851H1288V865H1290V872H1291V878H1292V872H1293V858H1297V851L1298 872H1302V858H1309V878H1313V858H1314V872H1317V878H1320L1321 851H1322V858H1323V865H1327V851H1328L1329 878H1334V872L1335 851H1337V858L1338 885H1341V872H1345V865H1348V872H1349V865H1350V878H1352V865H1353V878H1354V885H1355V865H1358V878H1362V865H1366V878H1367V872H1372V878H1373V865H1374V878H1377V885H1378V892H1379V878H1381V872H1382V878H1383V885H1385V892H1387V872H1389L1390 898H1391V885H1392V878H1393V872H1394V878H1395V872H1399V885H1400V892H1402V885H1405V892H1407V878H1408V892H1410V885H1411L1412 851H1413V865H1414V858H1415V851H1416V845H1417V838H1418V858H1419V845H1420V838H1421V818H1422V811H1423V804H1424L1425 778H1427V771L1428 798L1429 771H1430V764H1432V751H1433V744H1435V737H1436V757H1437V751L1438 717L1439 744H1440V737H1442V717L1443 690H1444V684H1447L1448 710H1450V704H1451V710H1452L1453 684H1456L1457 724H1458V710H1461V724L1462 697H1463V704H1466V697H1468V684L1469 717H1472V724L1473 690H1475V710H1476V697H1477V710H1483V704H1486V717H1489V710H1490V724H1493V710H1495V690H1497V684H1498V704H1499V710H1502V704H1504V710L1505 684L1506 724H1507V704H1508V710H1509V717H1510V710H1517V717H1519V697H1520V684H1525L1526 724H1528V710H1532V690H1533V704H1534V690H1537L1538 724H1539V704H1540V684H1542V697H1545V717H1547L1548 684L1549 724H1554V710H1555V704H1556V690H1558V710L1559 684H1560V704H1563V690H1567V684H1568L1569 724L1570 697H1571V684H1572L1573 717H1583L1584 684L1585 710H1591V704H1592V697H1593V684H1595V670H1596L1597 697H1598V704L1599 677H1600V690H1606V704H1607V690H1609V670H1610V677H1611V670H1612L1613 697H1616V704H1621V710H1622V697H1627V690H1632V704H1633L1634 677H1638L1639 710H1642V690H1644V677H1645V684H1646L1647 710L1648 684H1650V690H1652V704H1653V724L1654 697H1655V684H1659L1660 710H1663V704H1666V697H1667V690H1668V697H1675V717H1679V704H1681V717L1682 690H1686L1687 724H1689V710H1691V697H1693V690H1694V710H1695V717H1696V710H1699V690H1700V710H1701V704L1702 670" stroke="#40f0f0" stroke-width="2" fill="none" stroke-linejoin="miter" shape-rendering="crispEdges"/><path d="M254 664H255V657H268V664H271V657H275V664H278V657H290V664H292V657H295V650H297V664H301V650H305V657H308V664H309V657H312V664H330V657H334V664H344V657H347V664H360V657H377V664H379V657H380V664H382V657H385V664H387V657H388V664H394V657H397V650H398V657H403V650H404V657H406V650H409V657H410V664H412V657H418V650H432V657H434V650H438V657H439V650H443V657H448V650H449V657H450V650H456V657H457V650H462V664H464V657H475V650H477V657H478V650H493V657H496V650H497V657H501V650H504V657H505V650H512V643H515V650H526V643H528V650H535V657H538V643H545V650H559V643H561V650H563V643H566V650H568V643H582V650H584V643H586V650H587V643H594V657H595V650H604V657H611V650H618V657H630V650H631V657H632V650H633V657H634V650H637V657H644V650H646V657H651V650H653V657H654V650H656V657H663V650H666V657H667V650H673V657H677V650H678V657H682V650H684V657H688V650H693V657H701V650H703V657H705V650H706V657H707V650H709V664H711V657H717V650H722V657H724V650H727V657H729V650H751V657H756V650H761V657H763V650H764V657H767V650H769V657H775V650H780V657H783V650H785V657H787V650H799V657H806V650H809V657H814V650H821V657H823V650H826V657H827V650H832V643H833V657H841V643H842V657H850V650H851V657H859V650H864V657H867V650H869V657H878V650H882V657H884V650H889V657H893V650H895V657H897V650H901V657H912V650H914V657H915V650H921V657H922V664H924V650H931V657H934V650H936V657H938V650H939V657H944V650H948V643H951V650H954V643H957V637H960V643H964V637H970V643H971V637H974V643H975V637H978V643H979V637H981V643H995V637H997V643H998V637H999V643H1000V637H1001V643H1003V637H1004V643H1013V637H1015V643L1016 710H1017V724H1018V744L1019 798H1020V811L1021 838H1022V858H1025V878H1026V872H1027V885H1028V878H1029V885H1031V892H1033V885H1034V892H1036V898H1039V885H1040V905H1043V898H1046V885H1053V898H1054V905H1057V892H1058V905H1060V885H1061V892L1062 858H1063V845H1064V838H1065V831H1066V818H1067V804H1068V791H1069V798H1071V791H1074V784H1076V778H1078V771H1080V764H1081V757H1082V764H1086V757H1088V751H1089V737H1092V731H1094V724H1095V731H1097V724H1100V717H1102V704H1105V697H1108V690H1109V697H1111V690H1112V684H1114V677H1117V670H1119V677H1120V670H1122V664H1126V650H1129V643H1132V637H1133V643H1135V637H1138V630H1141V617H1147V623H1148V643H1149V657L1150 684L1151 710L1152 731H1153V751H1154V771H1155V778H1156V791H1157V798H1158V811H1160V804H1161V798H1162V791H1163V798H1168V811H1172V798H1174L1175 825L1176 798H1177L1178 825H1179V818H1181V811H1183V818H1191V804H1192V818H1195V825H1196V818H1197V811H1202V825H1205V818H1207V825H1209V831H1215V818H1216V825H1218V831H1223V838H1224V851H1226V838H1228V825L1229 851H1230V838H1231V851H1233V831H1234V845H1237V831H1238V838H1243V845H1246V838H1248V858H1251V845H1258V851H1260L1261 872H1265L1266 851H1268V845H1269V865H1270V872H1275V865H1277V872H1278L1279 851H1282L1283 872H1284V878H1285V858H1290V878H1294V858H1299V878H1302V865H1303V872H1304V858H1305V865H1307V858H1309L1310 885L1311 858H1313V865H1314V858H1315V865H1317V878H1319V858H1320V872H1321V878H1324V865H1325V872H1331V885H1333L1334 858H1335L1336 885H1340V865H1341V885H1342V872H1344V858L1345 885H1347V892H1350V878H1351V885H1353V892H1354V872H1355V865H1357V878H1358V872H1360V865L1361 892H1363V872H1366V885H1367V878H1369V885H1370V892H1374V898H1375V878H1376V885H1377V892H1381V872H1386V885H1392V892H1394V872H1398L1399 898H1402V892H1404V898H1405L1406 872H1409V892H1411L1412 865H1413V845H1415V851H1416V831H1417V825H1418V818H1419V811H1421V804H1422V798H1423V804H1425V798H1426V811H1427V804L1428 771H1430V764L1431 791H1432V778H1433V764H1434V757H1435V751H1437V757L1438 724H1439V717H1440V724H1441V717H1443V704H1445V710H1447V717H1449V704H1450V690H1451V710H1454V690H1458V704H1459V710H1461V717L1462 690H1466V710H1469V690L1470 717H1471V704H1472V717H1473L1474 690H1475V710H1480V704H1482V697H1485V704H1486V697H1488V704H1495V710H1496V704H1497V710H1498V704H1499V710H1506V717H1511V710H1512V717H1514V704H1517V690H1525L1526 717H1531V704H1533V697H1535V710H1537V690H1538V704H1539V710H1540V717H1541V710H1542V697H1543V704H1546V697H1548V704H1549V717L1550 690H1551L1552 717H1553V710H1554V717H1555V704H1558V717H1560V704H1562V717H1564V710H1572V690H1575V710H1578V690H1579V697H1583V710H1584V704H1585V717H1586L1587 690H1591V710H1592V704H1593V684H1595V704H1596V710H1598V690H1599V684L1600 710H1601L1602 684H1606V704H1610V690H1611V710H1614L1615 684H1616V690H1617V704H1623V710H1626V704H1628V690H1629V684H1632V697H1636V684H1638V704H1639V684H1640V704H1643V697H1646V710H1651V704H1653V710H1654V697H1655V710H1659V697H1660L1661 724H1662L1663 697H1667V704H1668V717H1669V724H1670L1671 697H1674V710H1676V724H1679V710H1682V724H1683V717H1688V704H1690V724H1693V717H1694V710H1696V690H1697V697H1699V690H1700V697H1702V690" stroke="#f040a8" stroke-width="2" fill="none" stroke-linejoin="miter" shape-rendering="crispEdges"/><path d="M254 670H260V664H265V670H269V664H271V670H274V664H282V670H284V657H285V670H292V664H294V670H296V664H298V670H307V664H311V670H321V664H322V670H324V664H331V670H332V664H333V670H334V664H340V670H341V664H344V670H346V657H348V670H350V664H351V670H352V664H355V670H357V664H360V670H364V664H371V670H379V664H380V670H383V664H385V670H386V664H388V670H389V664H392V670H393V664H394V670H395V664H396V670H398V664H399V670H402V664H403V657H408V664H409V657H412V664H413V657H415V670H416V657H421V664H422V657H423V664H426V657H427V664H433V657H439V664H440V657H445V664H447V657H452V650H457V657H463V664H464V657H466V664H467V657H478V664H483V657H486V664H490V657H491V664H496V657H497V664H503V657H505V664H506V657H507V664H508V657H511V650H512V657H518V650H519V657H520V650H521V657H522V650H524V657H525V650H528V657H529V650H530V643H531V657H532V650H539V657H540V650H543V657H547V650H548V664H549V650H556V657H561V650H576V643H578V657H587V664H588V657H594V650H597V657H599V664H603V657H604V664H607V657H608V664H611V657H613V664H614V657H615V664H617V670H619V664H620V657H624V664H625V657H631V664H632V657H633V664H637V657H641V664H643V657H644V664H647V657H651V664H653V657H658V664H663V657H666V664H667V657H670V664H675V657H676V664H683V650H686V657H687V664H694V657H698V664H703V657H705V664H712V657H718V664H720V670H721V657H725V664H728V657H738V664H739V657H743V664H753V657H755V650H757V657H770V664H773V657H777V664H786V670H787V664H788V657H791V664H793V657H801V664H802V657H808V664H810V657H813V664H815V657H823V664H824V657H825V664H827V657H832V664H843V657H844V664H853V657H856V664H857V657H860V664H866V657H869V664H872V657H873V664H877V657H883V664H884V670H885V657H887V664H888V657H894V664H905V657H909V664H910V657H912V664H913V657H914V664H915V657H916V664H917V657H918V664H923V650H926V657H936V664H937V657H941V664H943V657H944V670H948V664H951V657H956V650H958V657H959V650H961V657H965V650H966V657H967V650H985V657H993V643H994V657H999V650H1000V657H1005V664H1013V650H1015V657H1016V664L1017 690L1018 717L1019 744L1020 771L1021 798L1022 825H1023V845H1024V851H1025V838H1026V851H1028V858H1029V865H1030V851H1031V858H1032V865H1033V851H1035V865H1036V872H1039V878H1041V865H1045V872H1046V885H1047V892H1050V885H1052V865H1053V878H1054V885H1057V865H1059L1060 892H1061L1062 865H1064V858H1065V838H1066V831H1067V818H1068V811H1069V804H1071V798H1072V791H1074V784H1075V791H1076V784H1077V778H1078V771H1079V784H1080V778H1081V771H1083V764H1086V757H1089V751H1091V744H1092V737H1094V731H1099V724H1102V717H1105V710H1108V704H1110V697H1113V690H1114V684H1116V677H1117V690H1118V684H1119V677H1122V670H1123V664H1125V657H1128V650H1130V657H1131V650H1134V643H1136V637H1140V630H1143V617H1147V623H1148V643H1149V650H1150V670H1151V690H1152V710H1153V704L1154 737H1155V757L1156 778H1157V784H1158V798H1160V791H1164V798H1166V811L1167 784H1168V804H1169V798H1170V804H1172V798H1174V784L1175 811H1178V798H1183V791H1187V811H1188V791L1189 825L1190 798L1191 825H1192V811H1193V804H1194V818H1195V804H1199V798H1203V804H1206V818H1210V811H1213V825H1214V818H1215V804H1216V811H1217V818H1219V838H1220V818H1223V838H1226V825H1227V818H1229V825H1230V838H1232V845H1234V831H1238V825H1240V838H1241V851H1246L1247 825H1248V838H1250V851L1251 825H1252L1253 851H1254V845H1256V831H1257V851H1264V838H1265V845H1267V851H1268V858H1269V865H1270V845H1271V851H1272V845H1273V838H1277V845H1279V865H1281V851H1282V845L1283 872H1285L1286 845H1288V865H1291V858H1292V865H1293V858H1294V872H1296V865H1298V851L1299 872H1305V865H1310V851H1311V865H1313V858H1315V865H1321V851H1323V845H1324V865H1328V851H1330V845H1333V858H1334V845H1337V858H1338V865H1340V878H1343V865H1344V858H1347V865H1349V858H1350V851H1352V865H1354V858H1356V865H1357V872H1358V858H1359V865H1361V858H1362V865H1365V858H1371V872H1376V885H1378V865H1382V872H1388V865H1389L1390 892H1393V878H1396V892H1400V878H1401V872H1405V878H1406V872H1407V865H1409V872H1410V885H1412V878H1413V872L1414 845H1416V858H1418V851L1419 825H1420V831H1422V811H1423V804H1424V811H1425V791H1426V784H1427V798H1428V791H1430V784H1431V764H1433V757L1434 778H1435V771H1436V757H1437V751H1438V744H1440V737H1442V731L1443 704H1445V690H1448V710H1460V697H1461V710H1463V690H1464V697H1467V704H1470V697H1476V710H1477V704H1479V690H1482V697H1483V690H1485V697H1490V710H1491V697H1493V704H1494V717H1495V710H1496V690L1497 717H1498V697H1505V717H1506L1507 690H1510L1511 717L1512 690H1513V697H1519V710H1522V690H1527V697H1530V690H1532V704H1536V697H1538V704H1544V717H1545V704H1546V717H1547V710H1549V704H1552V710H1553V704H1554V710H1555V697H1557V717L1558 690H1561V704H1564V697H1565V704H1567V697H1570V704H1571V690H1572V697H1575V710H1578V690H1580V704H1582V717H1583V710H1587V704H1589V697H1592V717H1593V710H1594V697H1596V704H1597V697H1601V704H1602V684H1609V697H1612V690H1615V710H1617V704H1620V697H1621V710H1622V697H1623V684H1627V704H1629V690H1632V684L1633 710H1634V704H1643V710H1644L1645 684H1647V704H1648V690H1649V704H1653V690H1654V697L1655 724H1657V710H1658V724H1660V704H1666V697H1668V710H1670V697H1673V704H1675V710H1676V724L1677 697H1678L1679 724H1680V717H1681V710H1682V724H1683V717H1684V710H1686V704H1687V717H1688V697H1692V710H1693V717H1695V710H1696V704H1697V697H1699V684H1700V704H1702" stroke="#4848f0" stroke-width="2" fill="none" stroke-linejoin="miter" shape-rendering="crispEdges"/><path d="M254 670H256V664H258V670H261V664H267V657H270V664H272V670H273V657H274V670H275V664H276V670H285V664H288V670H290V664H292V677H295V670H298V664H299V670H300V664H301V670H302V664H309V670H311V664H314V670H316V664H317V670H319V664H321V670H322V664H325V670H328V664H329V670H339V664H343V670H347V657H348V664H350V670H357V677H362V664H369V670H371V664H373V670H378V664H383V670H390V664H394V670H395V664H400V670H402V664H406V657H407V650H409V670H410V664H412V657H414V664H418V657H419V664H420V657H424V664H431V657H434V664H436V657H443V664H446V657H448V664H449V657H456V664H458V657H459V664H461V657H464V664H467V657H468V664H469V657H470V664H476V670H479V657H482V664H483V657H490V664H491V657H494V664H497V657H498V664H509V657H510V664H513V657H516V650H517V657H520V650H521V657H522V650H523V657H532V650H534V657H539V650H541V657H545V664H546V657H550V650H553V657H554V650H559V657H560V650H568V657H571V650H572V657H577V650H579V657H582V650H588V657H590V664H591V650H592V664H593V650H597V664H602V657H606V664H614V657H616V664H620V657H624V664H625V657H626V664H627V657H628V664H631V657H632V664H633V657H635V664H639V657H640V664H644V657H649V664H653V650H654V664H662V657H666V670H667V657H670V664H672V657H683V664H687V657H695V664H704V657H706V664H709V657H713V664H714V657H719V664H725V657H730V664H732V657H734V664H742V657H746V664H748V657H753V664H755V657H759V664H765V657H773V664H781V657H784V664H787V657H788V664H791V657H792V664H795V657H802V650H805V670H806V657H808V664H822V657H823V664H825V657H829V664H832V657H836V664H838V657H841V664H843V657H848V664H852V657H856V664H859V657H860V664H867V670H871V657H876V664H877V657H887V664H890V657H891V664H892V657H894V664H896V657H900V664H902V657H909V664H911V657H917V670H918V664H927V657H929V664H932V657H943V664H944V657H950V664H953V657H954V650H956V657H957V650H964V657H966V650H968V657H971V650H973V657H977V650H978V657H981V650H992V657H993V650H998V657H1001V650H1002V657H1003V664H1006V650H1007V657H1009V650H1015V657H1016V677H1017V657L1018 684L1019 731L1020 757L1021 784H1022V804H1023V811H1024V831L1025 865H1029V845H1033V865H1036V872H1037V878H1039V865H1040V872H1041V865H1043L1044 892H1045V878H1047V865H1049V872H1054V892H1055V872H1056V878H1060V872H1061V865H1064V858H1065V851H1066V845H1067V838H1068V825H1069V818H1070V804H1072V791H1074V784H1075V791H1076V784H1077V778H1078V784H1079V778H1082V771H1084V764H1087V757H1090V751H1092V744H1095V737H1098V724H1100V717H1102V724H1103V717H1104V710H1106V697H1107V704H1109V697H1114V690H1117V684H1120V670H1123V664H1125V670H1126V657H1129V650H1130V657H1132V643H1135V637H1138V630H1140V637H1141V630H1144V623H1146V617H1147V610H1148V623H1149V630H1150L1151 657H1152V677H1153V697H1154V717H1155V737H1156V751H1157V771H1158V784H1160V778H1161V784H1162V791H1163V784H1164V791H1165V798H1166V804H1168V791H1170V798H1171V818H1172L1173 791H1175V798H1176V804H1178V818H1179V804H1180V811H1181V804H1183V798H1185V818H1186V811H1187V798H1191V804H1192V818H1194V798H1196V818H1197V811H1198V825H1200V818H1202V811H1207V831H1208V811H1209V804H1210L1211 838H1219V825H1220V838H1225V845H1228V825H1229V818H1230V825H1231V831H1235V825H1236V831H1237V838H1240V845H1244V851H1246V845H1251V831L1252 858H1256V838H1257V851H1259V845H1260V851H1261V838H1262V845H1263V838H1272V845L1273 872L1274 851H1278V845L1279 872L1280 845H1281V858H1287V845H1289V858H1291V845H1293V865H1296V872L1297 845H1299V865H1301V872H1302V858H1304V865H1311V858H1314V878L1315 851L1316 872H1317V858H1323V865H1324V851H1325V865H1326V878H1327V872H1329L1330 851H1331V865H1336V858H1337V872H1339V878H1340V872H1345V878H1346L1347 851L1348 878H1349V885H1355V872H1356V865H1357V878H1358V865H1360V878H1362V885H1363V865H1366V872H1372V892H1373V878H1374V892H1376V878H1380V892L1381 865H1384V872H1389V865H1391V872H1392V892H1393V878H1398V865H1400V878H1404V892L1405 865H1408V872H1409V878H1412V865H1415V858H1416V872L1417 838H1418V831H1420V825H1421V818H1423V811H1424V804H1425V818H1428V811H1429V804H1430L1431 778H1432V791H1433V771H1435V778H1436V771H1438V764H1439V757H1440V751H1441V737H1443V717H1444V710H1445V704H1446V697H1448V717H1452V724H1454V710H1458V704H1459V697H1466V704H1468V717H1471V697H1475V717H1476V710H1477V724H1478V710H1482V724H1483L1484 697L1485 724H1486V704H1488V724H1489V710H1490V717H1492V704H1507V710H1508V704H1510V717H1512V724H1515V704H1517V717H1518V697H1519V710H1523V704H1533V697H1534V704H1536V710H1537V724H1540V710H1544V697H1545V704H1547V724H1548L1549 697H1550L1551 724H1552L1553 697H1556V717H1558V724H1564V710H1567V724H1568V717H1570V710H1571V724H1575V704H1579V697H1580L1581 724H1584V704H1589V710H1591V697H1592V710H1593V704H1595V710H1596V704H1600V710H1602V704H1603V684L1604 710H1606V704H1608V690H1609V697H1613V710H1616V690H1618V710H1619V697H1621V690H1626V684L1627 710H1636L1637 684H1638V690H1640V710H1641V690H1645V697H1647V710H1648V697H1649V704H1650V717H1651V724H1653L1654 697H1661V704H1663V710H1664V697H1667V710H1668V717H1674V724H1675L1676 697H1681V704H1682V697H1684L1685 724H1694V704H1695V724H1697V704H1700V684H1702V677" stroke="#f0a818" stroke-width="2" fill="none" stroke-linejoin="miter" shape-rendering="crispEdges"/><path d="M254 684H259V677H260V684H268V677H270V684H272V677H283V684H292V677H293V684H294V677H299V684H301V677H306V684H309V677H317V684H320V677H322V684H325V677H328V690H330V684H333V677H336V684H343V677H344V684H346V677H348V684H361V690H362V684H363V677H369V684H371V677H377V684H379V677H382V684H383V677H384V684H386V677H389V684H403V677H406V670H409V677H417V684H421V677H426V670H428V677H429V670H432V677H434V670H439V677H440V670H444V677H446V670H452V677H456V670H462V677H464V670H465V677H472V670H475V677H482V670H484V677H485V670H488V677H498V670H499V677H505V670H507V677H510V670H511V664H516V670H517V664H520V670H524V664H537V670H539V664H540V670H550V664H551V670H559V664H563V670H565V664H566V670H568V664H571V670H572V664H577V670H581V664H582V670H583V684H586V677H592V684H600V690H601V684H604V690H611V684H613V690H632V684H635V690H641V697H642V690H644V684H645V690H647V684H652V690H656V684H660V670H661V677H666V670H668V677H670V684H672V677H674V670H675V677H676V670H685V677H688V664H690V670H696V677H702V670H712V677H720V670H721V677H724V670H730V677H735V684H736V677H737V670H738V677H740V670H745V677H749V670H750V664H751V677H763V670H767V677H768V670H774V677H775V670H776V684H778V677H782V670H785V677H793V670H804V677H813V670H819V677H821V670H822V677H825V670H832V677H836V670H842V677H845V670H848V677H850V670H851V677H857V670H861V677H867V670H871V677H876V670H878V664H879V670H880V677H881V670H885V664H886V670H893V677H897V670H899V677H901V670H902V677H905V670H907V677H909V670H912V677H914V670H922V677H923V670H930V677H931V670H932V677H934V684H935V670H937V677H947V670H950V677H956V670H959V664H960V670H961V664H968V670H976V664H986V670H991V664H992V670H997V664H999V670H1000V657H1001V664H1003V677H1004V670H1013V664H1015V670H1016V684H1019L1020 710L1021 737L1022 764L1023 791H1024V798L1025 851H1026V865H1029V872H1034V865L1035 892H1036V898H1038V892H1043V905H1048V885H1051V898H1055V892H1057V905H1059L1060 878H1062V872H1063V865H1067V851H1068V845H1069V831H1070V825H1071V811H1072V798H1074V804H1075V791H1080V784H1081V778H1083V771H1088V764H1090V757H1093V751H1096V744H1098V737H1101V724H1104V717H1108V710H1112V704H1113V697H1114V690H1118V684H1119V690H1121V684H1124V677H1126V670H1127V664H1130V657H1133V650H1134V657H1136V650H1139V637H1142V630H1146V623H1151V630H1152V637L1153 670L1154 697H1155V717H1156V737H1157V744L1158 784H1161L1162 811H1165V791H1168V804H1169V798H1170V791H1172V811H1175V825L1176 798H1178V818H1179V825L1180 804H1184V818H1185V825L1186 804H1189V811H1190V831H1191V818H1194V811H1198V804H1199V811H1201V818H1206V838H1208V825H1212V811L1213 845H1215V838H1217V818H1218L1219 845H1220V831H1222V845H1223V831H1224V825H1227V831H1235V838H1238V845H1241V831H1243V838H1245V845H1246V851H1250V845H1254V865H1261V845H1262V851H1264L1265 872H1266V865H1267V872H1269V865H1271V845H1273L1274 872H1276V865H1277V878H1278V865H1280V872H1281V865H1282V851L1283 878L1284 851H1285V858H1287V851L1288 878H1289V872H1292V865H1294V851H1295L1296 872H1297V865H1298V851H1299V865H1300V858H1301V865H1305V851H1307V858H1308V872H1312V878H1314V858H1317V865H1318V885H1319V878H1320V865H1321V872H1323V865H1324V858H1329V865H1330V878H1332V885H1334V865H1335V872H1336V865H1338V858H1342V878H1345V858H1346L1347 885L1348 858H1349V865H1351V878H1353V865H1355V885H1356V878H1358V892H1362V872H1363V865H1364L1365 892L1366 865L1367 892H1368V872H1371V885H1372V865H1373V872L1374 898H1377L1378 872H1381V892H1382V878H1383V872H1384V892H1387V898H1388V878H1390V898H1396V892H1397V898H1398V892H1399V878H1400V892H1403V872H1404V878H1405V885H1409V892H1410V898H1412V892H1416V885H1417V878H1419V872H1420V865L1421 838H1422V831H1423V825H1425V831H1426V825L1427 804H1428V811H1429V791L1430 818H1431V811L1432 784H1433V804H1434V791H1437V784L1438 757H1439V751H1441V744H1442V751H1443V731H1444V744H1445V724H1446V704H1447V697H1452V717H1453V704H1455V697H1457V704H1458V724H1460V717H1462V704H1469V697H1470V710H1471V697H1472L1473 724H1474V710H1478V697H1481V717H1482V704H1483V697H1484V717H1487V710H1488V704H1490V710H1493V697H1494V717H1495V710H1505V704H1506V710H1507V724H1510V717H1516V697H1517L1518 724L1519 697H1523V704H1526V724H1529V710H1539V724H1541V704H1542V717H1544V710H1545V717H1549V697H1551V717H1552V710H1554V697H1556L1557 724H1559V710H1561V724H1563V710H1568V704H1571V717H1574V704H1575V710H1577V724H1585V710H1588V704H1589V724H1590V704H1593V717H1595V724H1596V704H1599V717H1600V704H1604V690H1605V704H1609V717H1618L1619 690H1621V710H1624V690H1627L1628 717H1632V710H1633V690H1639V710H1641V697H1646V690H1648L1649 717H1650V724H1655V704H1657V710L1658 731H1663V717H1666V704H1669V717H1672V724H1674V731H1680V724H1682V710L1683 731L1684 710H1685V704H1686V717H1690V710H1691V717H1692V731L1693 704H1698V717H1699V710H1700V704H1702V717" stroke="#c050f0" stroke-width="2" fill="none" stroke-linejoin="miter" shape-rendering="crispEdges"/><path d="M254 697H255V690H257V697H259V690H260V697H267V690H271V704H273V690H275V697H277V704H281V690H286V697H288V684H289V690H290V704H292V690H315V697H318V690H321V697H323V710H324V697H331V690H335V697H336V690H337V684H338V697H340V710H341V704H343V697H344V684H348L349 710H351V690H352V710H355V704H356V690H362V697H365V690H366V697H368V704H370V690H372V697H380V710H381V690H386V697H387V690H388V704H391V697H397V684H405V690H412V684H416V690H432V684H435V690H446V684H449V697H451V684H454V677H456V690H458V684H461V690H462V684H464V690H465V684H467V704H469V684H478V690H480V697H482V684H483V704H486V684H487V697H488V684H496V697H497V677H499V690H501V684H502V697H505V684H506V670H507V677H509V684H512V677H513V690H521V684H531V690H532V677H533V670H537V684H539V690H541V677H544V684H547V677H548V684H553V690H554V684H566V697H569V684H577V677H578V684H579V697H581V677H582L583 704H584V710H589V704H607V717H610V710H612V704H614V717H620V704H623V717H624V710H627V704H628V697H632V710H634V704H636V710H639V704H640V710H644V704H645V710H651V704H652V710H654V704H656V710H657V704H659V710H660V697H661V704H664V697H667V690H668V697H670V690H674V697H676V690H684V710H685V697H689V690H691V697H692V690H693V704H695V690H699V697H704V690H706V697H708V690H710V697H716V690H718V697H719V690H723V684H724V690H728V697H733V710H735V690H736V697H737V704H738V697H742V690H744V697H749V704H753V697H757V690H760V697H761V704H766V697H768V684H769L770 710H771V697H772V690H774V697H777V690H781V704H784V697H785V690H793V697H796V690H797V697H798V704H803V697H805V690H807V704H808V690H811V697H822V690H827V697H831V690H832V697H835V690H838V697H847V704H849V697H852V704H853V690H854V704H856V684H859V697H861V690H862V697H864V704H865V697H866V690H874V697H886V704H890V690H899V697H900V690H901V684H905V690H906V684H910V690H911V684H912V690H916V697H917V684H918V690H920V697H921V690H923V697H926V690H943V697H944V684H945V677H946V684H952V677H955V684H957V677H958V670H963V664H964V677H968V670H971V684H972V670H973V677H978V664H979V684H981V670H983V684H984V677H991V670H992V684H996V670H997V677H1000V664H1003V677H1010V670H1011V684H1013V670L1014 697L1015 724L1016 764L1017 791L1018 838L1019 865H1020V885H1021V872H1023V858H1025V865L1026 898H1029V905H1030L1031 872H1032V878H1033V898H1034V905H1035V912H1036V918L1037 892H1041V912H1044V925H1047L1048 898H1053V918H1061V905L1062 845L1063 804H1064V784H1065V764H1066V751H1067V737H1068V744H1069V737H1072V724H1074V717H1077V710H1079V717H1080V710H1081V704H1082V697H1085V690H1086V697H1088V690H1091V684H1092V677H1093V684H1094V677H1096V670H1098V664H1099V657H1102V650H1104V657H1106V650H1110V643H1113V630H1114V623H1116V630H1117V623H1123V617H1124V623H1128V603H1130V617H1132V610H1133V603H1136V590H1137V596H1138V590H1139V596H1140V590H1143V596H1144V603H1145V610H1146V623L1147 650L1148 690H1149V710L1150 731H1151V751L1152 784H1153V804H1155V784H1156V791H1159L1160 818H1161V825H1164V818H1166V804H1168L1169 825H1170V811H1172V831L1173 804H1178L1179 838H1191V831H1193V838H1194V845H1199L1200 818L1201 845H1202V838H1205V831H1207V838H1208V825H1210V845H1211V851L1212 825H1213V831H1217V851H1223V858H1224V845H1225V851H1226V845H1228V838H1232V845H1235V858H1236V838H1237V858H1239V851H1240V858H1246V845H1247V851H1248V845H1250V851H1255L1256 878H1260V858H1262V865H1266V872H1268V878H1271V885H1285V865H1286V878H1287V885H1289V872H1291V878H1295V885H1297L1298 858H1299V872H1300V878H1301V892H1305V878H1308V885H1309V878H1310V885H1314V872H1316V885H1320V872H1321V892H1322V872H1324V892H1325V872H1332V892H1334V872H1335V878H1337V885H1343V872H1345V892H1347V898H1348V885H1349V878H1353V885H1355V898H1357V885H1358V898H1364V892H1367V885H1368V892H1371V898H1373V885H1375V898H1379V892H1382V898H1383V885H1387V898H1388V885H1390V892H1391V898H1392V905H1396V892H1398V878H1400V898H1402V878H1403V885H1404V878H1405V865H1409V858L1410 831H1411V818L1412 798L1414 818L1416 771L1418 798L1420 710L1422 724L1424 690L1426 690L1428 697L1430 690L1432 657L1434 637L1436 677L1438 677L1440 664L1442 677L1444 664L1446 637L1448 670L1450 637L1452 670L1454 710L1456 764L1458 724L1460 731L1462 697L1464 697L1466 710L1468 717L1470 717L1472 710L1474 697L1476 724L1478 710L1480 710L1482 717L1484 704L1486 737L1488 724L1490 677L1492 657L1494 704L1496 724L1498 657L1500 737L1502 684L1504 697L1506 764L1508 697L1510 744L1512 731L1514 670L1516 717L1518 731L1520 690L1522 657L1524 670L1526 717L1528 731L1530 657L1532 650L1534 757L1536 657L1538 710L1540 724L1542 751L1544 690L1546 724L1548 697L1550 724L1552 717L1554 724L1556 643L1558 704L1560 677L1562 757L1564 710L1566 677L1568 704L1570 704L1572 717L1574 717L1576 731L1578 710L1580 724L1582 690L1584 731L1586 684L1588 690L1590 690L1592 677L1594 710L1596 737L1598 690L1600 717L1602 697L1604 731L1606 724L1608 690L1610 677L1612 710L1614 664L1616 690L1618 731L1620 751L1622 704L1624 684L1626 677L1628 757L1630 657L1632 690L1634 710L1636 697L1638 757L1640 670L1642 677L1644 751L1646 731L1648 744L1650 744L1652 670L1654 690L1656 737L1658 771L1660 757L1662 757L1664 744L1666 717L1668 764L1670 724L1672 731L1674 690L1676 677L1678 731L1680 664L1682 737L1684 737L1686 764L1688 764L1690 657L1692 751L1694 670L1696 717L1698 690L1700 731L1702 677" stroke="#d4f46c" stroke-width="2" fill="none" stroke-linejoin="miter" shape-rendering="crispEdges"/><path d="M254 670H255V664H260V670H265V664H269V670H273V664H275V670H276V664H279V670H281V664H282V670H286V664H289V670H291V664H293V670H295V664H305V670H308V657H311V670H312V664H315V670H320V664H325V670H326V664H327V670H328V664H329V670H334V664H348V670H349V664H353V670H356V664H358V670H362V664H364V670H372V664H378V670H385V664H387V670H395V664H400V657H401V664H403V657H410V664H411V657H415V650H417V664H423V657H429V664H435V657H437V664H439V657H442V664H443V657H444V670H446V657H451V664H455V657H466V664H468V657H470V664H475V657H476V664H477V657H480V664H486V670H489V664H493V670H498V657H501V664H504V657H505V650H506V657H507V650H512V657H514V650H515V657H516V650H519V657H520V650H531V657H533V650H534V657H535V650H552V657H553V650H557V657H558V650H561V657H568V650H569V657H570V650H574V643H576V650H578V657H584V664H587V657H589V664H592V657H593V664H595V657H599V650H601V664H605V657H612V664H615V657H625V664H629V657H635V670H637V664H640V657H642V664H643V657H648V664H654V657H659V650H660V664H663V657H673V664H677V657H679V664H685V657H690V664H694V650H695V657H696V650H698V657H700V664H701V657H704V650H706V664H709V657H711V664H714V657H716V664H722V657H723V664H735V657H738V664H739V657H741V650H742V657H755V664H756V657H757V664H760V657H764V664H765V670H766V657H769V664H771V657H780V664H781V657H786V670H787V657H788V664H790V650H791V664H793V657H794V670H796V664H800V657H805V664H806V657H807V664H809V657H820V650H824V657H828V664H833V657H836V664H838V657H840V664H841V670H843V664H847V657H848V664H853V670H856V664H859V657H864V664H873V657H881V664H885V657H889V664H895V657H898V664H908V657H910V664H911V657H927V664H931V657H932V664H934V650H936V664H950V657H952V650H960V657H965V650H966V657H969V650H974V657H976V650H979V657H981V650H982V657H989V650H990V657H994V650H996V657H997V650H1000V657H1002V650H1004V657H1006V650H1007V657H1008V650H1013L1014 677L1015 704L1016 731L1017 757L1018 798L1019 825H1020V818H1021V825H1023V838H1024V851H1025V838H1029V845H1032V851H1036V858H1038V872H1040V878H1043V872H1046V865H1047V878H1048V858H1052V851L1053 878H1055V858H1056V878H1060L1061 845H1062V838H1063V831H1064V825H1065V818H1066V804H1068V791H1072V784H1073V778H1074V771H1076V784H1077V771H1079V764H1082V751H1083V757H1084V744H1087V737H1090V731H1092V724H1095V717H1098V710H1099V704H1100V710H1102V704H1103V697H1105V704H1106V690H1111V684H1112V677H1115V670H1116V677H1117V670H1118V664H1120V657H1124V650H1125V657H1126V650H1127V643H1129V650H1133V643H1135V637H1136V630H1139V623H1142V617H1145V623H1146V617L1147 650H1148V670H1149V677H1150V697H1151V717H1152V737L1153 778H1154V784H1156V791L1157 764L1158 791H1159V778H1160V791H1161V778H1162V791H1166V798H1169V778H1172V784H1175V804H1177V791H1178V798H1180V804H1182V791H1184V804H1185V791H1186V811H1187V798H1188V804H1189V811H1190V791H1191V784H1192V804H1193V811H1197V804H1201V811H1202V804H1203V818L1204 791H1205V811H1206V791H1207V811H1208V804H1209V798H1210V818H1213V825H1218V818H1221V825H1223V831H1229V818H1232V838H1233V818H1234V825H1235V811H1237V831H1241V818H1243V825H1244V831H1247V825H1250V845H1251L1252 818H1254V838H1256V845H1257V838H1258V851H1259V845H1260V825H1262V845H1264V851H1266L1267 825H1268V831L1269 858H1270V851H1273V831H1274V838H1275V858H1277V838H1280V858H1282V851H1288V838H1290V831H1291V845H1292V838H1294V858H1296V838H1297V858H1298V838H1301V845H1306V838H1309L1310 865L1311 838H1312V858H1314V851H1315V858H1316V838H1321L1322 865H1329V845H1333V851H1334V838H1335V845H1336V851H1338V838H1341V851H1342V858H1343V851H1345V858H1346V872H1358V858H1359V865H1368V878L1369 851H1372V865H1375V858H1377V865H1378V858H1383V865H1386V858H1388V865H1389V851H1392V858H1395V865H1397V851H1404V865H1406V878H1409V865H1411V858H1412V851H1413V858H1414V851H1415V838H1416V831H1417V825H1418V818H1419V811H1420V804H1421V811H1422V818H1424V811H1425V791H1427V784H1429V778H1432V771H1433V764H1435V757H1436V751L1437 710H1439V717H1440V731L1441 690H1443L1444 724H1447V704H1453V717H1454V724L1455 697H1456L1457 724L1458 697H1459V704H1462V724H1465V717H1466L1467 690H1468V697H1469V717H1470V704H1471V717H1475V697H1476V717H1477V697H1479V684H1481V697H1482V704H1484V690H1487V704H1489V684H1490L1491 717H1493V710H1495V697H1497V690L1498 724H1499V710H1501V704H1502V717H1503V710H1505V717H1507V710H1510L1511 684H1512L1513 710H1514V704H1515V697H1516V704H1523V710H1525V697H1526V684H1532V690H1534V704H1538V717H1540V697H1544V690L1545 717L1546 684H1548V704H1550V690H1553V710H1557V704H1558V690H1560V684H1561V690H1562V710H1563V697H1565L1566 724H1567L1568 684H1569V704H1581V684H1582L1583 724H1588V717H1589V704H1591L1592 677H1596V684H1597V690H1598V697H1603V710H1604L1605 677H1608V670H1609V677H1611L1612 704H1616V710H1617V697H1618V704H1619L1620 677H1622L1623 704L1624 677H1626V697H1627V677H1628V684H1629V677H1634V690H1636V704H1637V697H1638V690H1639V710H1641V717H1644V697H1645V704H1646V690L1647 724L1648 684H1649V690H1653V704H1655V684H1656L1657 724H1662V717L1663 690H1664V684L1665 717H1670L1671 690H1673L1674 717H1677V697H1679L1680 724L1681 697H1684L1685 724H1687V704H1692V717H1693V697H1695V717H1696V710H1697V704H1698V697L1699 664H1701V657H1702" stroke="#40b8f0" stroke-width="2" fill="none" stroke-linejoin="miter" shape-rendering="crispEdges"/><rect x="767" y="632" width="4" height="367" fill="#58b4e4"/><rect x="767" y="631" width="2" height="8" fill="#8010c0"/><path d="M324.5 653.5l7 7M331.5 653.5l-7 7M321 657.5h3M333 657.5h3M324.5 660.5l7 7M331.5 660.5l-7 7M321 664.5h3M333 664.5h3M324.5 666.5l7 7M331.5 666.5l-7 7M321 670.5h3M333 670.5h3M324.5 686.5l7 7M331.5 686.5l-7 7M321 690.5h3M333 690.5h3M324.5 693.5l7 7M331.5 693.5l-7 7M321 697.5h3M333 697.5h3" stroke="#f0d000" stroke-width="1"/><rect x="254" y="662" width="1448" height="2" fill="#f4f4f4"/><rect x="263" y="337" width="116" height="211" fill="#212121"/></svg>
<div class="t" style="left:263px;top:336px;height:22px;line-height:22px;font-size:11px;color:#fff;font-family:'Liberation Mono',monospace;letter-spacing:-0.6px">2020-05-06 10:00:23</div>
<div class="t" style="left:263px;top:349px;height:24px;line-height:24px;font-size:12px;color:#ffd800;">功率</div>
<div class="t" style="left:329px;top:350px;height:22px;line-height:22px;font-size:11px;color:#ffd800;font-family:'Liberation Mono',monospace;letter-spacing:-0.6px">0.000</div>
<div class="t" style="left:263px;top:363px;height:24px;line-height:24px;font-size:12px;color:#ffd800;">温度</div>
<div class="t" style="left:293px;top:364px;height:22px;line-height:22px;font-size:11px;color:#ffd800;font-family:'Liberation Mono',monospace;letter-spacing:-0.6px">1</div>
<div class="t" style="left:329px;top:364px;height:22px;line-height:22px;font-size:11px;color:#ff1818;font-family:'Liberation Mono',monospace;letter-spacing:-0.6px">26.800</div>
<div class="t" style="left:263px;top:377px;height:24px;line-height:24px;font-size:12px;color:#ffd800;">温度</div>
<div class="t" style="left:293px;top:378px;height:22px;line-height:22px;font-size:11px;color:#ffd800;font-family:'Liberation Mono',monospace;letter-spacing:-0.6px">2</div>
<div class="t" style="left:329px;top:378px;height:22px;line-height:22px;font-size:11px;color:#ffd800;font-family:'Liberation Mono',monospace;letter-spacing:-0.6px">26.700</div>
<div class="t" style="left:263px;top:391px;height:24px;line-height:24px;font-size:12px;color:#ffd800;">温度</div>
<div class="t" style="left:293px;top:392px;height:22px;line-height:22px;font-size:11px;color:#ffd800;font-family:'Liberation Mono',monospace;letter-spacing:-0.6px">3</div>
<div class="t" style="left:329px;top:392px;height:22px;line-height:22px;font-size:11px;color:#40ff40;font-family:'Liberation Mono',monospace;letter-spacing:-0.6px">26.600</div>
<div class="t" style="left:263px;top:405px;height:24px;line-height:24px;font-size:12px;color:#ffd800;">温度</div>
<div class="t" style="left:293px;top:406px;height:22px;line-height:22px;font-size:11px;color:#ffd800;font-family:'Liberation Mono',monospace;letter-spacing:-0.6px">4</div>
<div class="t" style="left:329px;top:406px;height:22px;line-height:22px;font-size:11px;color:#ffd800;font-family:'Liberation Mono',monospace;letter-spacing:-0.6px">26.700</div>
<div class="t" style="left:263px;top:419px;height:24px;line-height:24px;font-size:12px;color:#ffd800;">温度</div>
<div class="t" style="left:293px;top:420px;height:22px;line-height:22px;font-size:11px;color:#ffd800;font-family:'Liberation Mono',monospace;letter-spacing:-0.6px">5</div>
<div class="t" style="left:329px;top:420px;height:22px;line-height:22px;font-size:11px;color:#ffd800;font-family:'Liberation Mono',monospace;letter-spacing:-0.6px">26.700</div>
<div class="t" style="left:263px;top:433px;height:24px;line-height:24px;font-size:12px;color:#ffd800;">温度</div>
<div class="t" style="left:293px;top:434px;height:22px;line-height:22px;font-size:11px;color:#ffd800;font-family:'Liberation Mono',monospace;letter-spacing:-0.6px">6</div>
<div class="t" style="left:329px;top:434px;height:22px;line-height:22px;font-size:11px;color:#ffd800;font-family:'Liberation Mono',monospace;letter-spacing:-0.6px">26.800</div>
<div class="t" style="left:263px;top:447px;height:24px;line-height:24px;font-size:12px;color:#ffd800;">温度</div>
<div class="t" style="left:293px;top:448px;height:22px;line-height:22px;font-size:11px;color:#ffd800;font-family:'Liberation Mono',monospace;letter-spacing:-0.6px">7</div>
<div class="t" style="left:329px;top:448px;height:22px;line-height:22px;font-size:11px;color:#ffd800;font-family:'Liberation Mono',monospace;letter-spacing:-0.6px">26.600</div>
<div class="t" style="left:263px;top:461px;height:24px;line-height:24px;font-size:12px;color:#ffd800;">温度</div>
<div class="t" style="left:293px;top:462px;height:22px;line-height:22px;font-size:11px;color:#ffd800;font-family:'Liberation Mono',monospace;letter-spacing:-0.6px">9</div>
<div class="t" style="left:329px;top:462px;height:22px;line-height:22px;font-size:11px;color:#ffd800;font-family:'Liberation Mono',monospace;letter-spacing:-0.6px">26.700</div>
<div class="t" style="left:263px;top:475px;height:24px;line-height:24px;font-size:12px;color:#ffd800;">温度</div>
<div class="t" style="left:293px;top:476px;height:22px;line-height:22px;font-size:11px;color:#ffd800;font-family:'Liberation Mono',monospace;letter-spacing:-0.6px">10</div>
<div class="t" style="left:329px;top:476px;height:22px;line-height:22px;font-size:11px;color:#ffd800;font-family:'Liberation Mono',monospace;letter-spacing:-0.6px">26.800</div>
<div class="t" style="left:263px;top:489px;height:24px;line-height:24px;font-size:12px;color:#ffd800;">温度</div>
<div class="t" style="left:293px;top:490px;height:22px;line-height:22px;font-size:11px;color:#ffd800;font-family:'Liberation Mono',monospace;letter-spacing:-0.6px">11</div>
<div class="t" style="left:329px;top:490px;height:22px;line-height:22px;font-size:11px;color:#ffd800;font-family:'Liberation Mono',monospace;letter-spacing:-0.6px">26.800</div>
<div class="t" style="left:263px;top:503px;height:24px;line-height:24px;font-size:12px;color:#ffd800;">温度</div>
<div class="t" style="left:293px;top:504px;height:22px;line-height:22px;font-size:11px;color:#ffd800;font-family:'Liberation Mono',monospace;letter-spacing:-0.6px">12</div>
<div class="t" style="left:329px;top:504px;height:22px;line-height:22px;font-size:11px;color:#ffd800;font-family:'Liberation Mono',monospace;letter-spacing:-0.6px">26.800</div>
<div class="t" style="left:263px;top:517px;height:24px;line-height:24px;font-size:12px;color:#ffd800;">温度</div>
<div class="t" style="left:293px;top:518px;height:22px;line-height:22px;font-size:11px;color:#ffd800;font-family:'Liberation Mono',monospace;letter-spacing:-0.6px">13</div>
<div class="t" style="left:329px;top:518px;height:22px;line-height:22px;font-size:11px;color:#ffd800;font-family:'Liberation Mono',monospace;letter-spacing:-0.6px">26.800</div>
<div class="t" style="left:263px;top:531px;height:24px;line-height:24px;font-size:12px;color:#ffd800;">温度</div>
<div class="t" style="left:293px;top:532px;height:22px;line-height:22px;font-size:11px;color:#ffd800;font-family:'Liberation Mono',monospace;letter-spacing:-0.6px">14</div>
<div class="t" style="left:329px;top:532px;height:22px;line-height:22px;font-size:11px;color:#ffd800;font-family:'Liberation Mono',monospace;letter-spacing:-0.6px">26.800</div>
<div class="t" style="right:1670px;top:317px;height:24px;line-height:24px;font-size:12px;color:#000;text-align:right;">30.0</div>
<div class="t" style="left:1706px;top:317px;height:24px;line-height:24px;font-size:12px;color:#000;">1.0</div>
<div class="t" style="right:1670px;top:350px;height:24px;line-height:24px;font-size:12px;color:#000;text-align:right;">29.5</div>
<div class="t" style="left:1706px;top:350px;height:24px;line-height:24px;font-size:12px;color:#000;">0.9</div>
<div class="t" style="right:1670px;top:384px;height:24px;line-height:24px;font-size:12px;color:#000;text-align:right;">29.0</div>
<div class="t" style="left:1706px;top:384px;height:24px;line-height:24px;font-size:12px;color:#000;">0.8</div>
<div class="t" style="right:1670px;top:417px;height:24px;line-height:24px;font-size:12px;color:#000;text-align:right;">28.5</div>
<div class="t" style="left:1706px;top:417px;height:24px;line-height:24px;font-size:12px;color:#000;">0.7</div>
<div class="t" style="right:1670px;top:451px;height:24px;line-height:24px;font-size:12px;color:#000;text-align:right;">28.0</div>
<div class="t" style="left:1706px;top:451px;height:24px;line-height:24px;font-size:12px;color:#000;">0.6</div>
<div class="t" style="right:1670px;top:484px;height:24px;line-height:24px;font-size:12px;color:#000;text-align:right;">27.5</div>
<div class="t" style="left:1706px;top:484px;height:24px;line-height:24px;font-size:12px;color:#000;">0.5</div>
<div class="t" style="right:1670px;top:518px;height:24px;line-height:24px;font-size:12px;color:#000;text-align:right;">27.0</div>
<div class="t" style="left:1706px;top:518px;height:24px;line-height:24px;font-size:12px;color:#000;">0.4</div>
<div class="t" style="right:1670px;top:551px;height:24px;line-height:24px;font-size:12px;color:#000;text-align:right;">26.5</div>
<div class="t" style="left:1706px;top:551px;height:24px;line-height:24px;font-size:12px;color:#000;">0.3</div>
<div class="t" style="right:1670px;top:585px;height:24px;line-height:24px;font-size:12px;color:#000;text-align:right;">26.0</div>
<div class="t" style="left:1706px;top:585px;height:24px;line-height:24px;font-size:12px;color:#000;">0.2</div>
<div class="t" style="right:1670px;top:618px;height:24px;line-height:24px;font-size:12px;color:#000;text-align:right;">25.5</div>
<div class="t" style="left:1706px;top:618px;height:24px;line-height:24px;font-size:12px;color:#000;">0.1</div>
<div class="t" style="right:1670px;top:652px;height:24px;line-height:24px;font-size:12px;color:#000;text-align:right;">25.0</div>
<div class="t" style="left:1706px;top:652px;height:24px;line-height:24px;font-size:12px;color:#000;">0.0</div>
<div class="t" style="right:1670px;top:686px;height:24px;line-height:24px;font-size:12px;color:#000;text-align:right;">24.5</div>
<div class="t" style="left:1706px;top:686px;height:24px;line-height:24px;font-size:12px;color:#000;">-0.1</div>
<div class="t" style="right:1670px;top:719px;height:24px;line-height:24px;font-size:12px;color:#000;text-align:right;">24.0</div>
<div class="t" style="left:1706px;top:719px;height:24px;line-height:24px;font-size:12px;color:#000;">-0.2</div>
<div class="t" style="right:1670px;top:753px;height:24px;line-height:24px;font-size:12px;color:#000;text-align:right;">23.5</div>
<div class="t" style="left:1706px;top:753px;height:24px;line-height:24px;font-size:12px;color:#000;">-0.3</div>
<div class="t" style="right:1670px;top:786px;height:24px;line-height:24px;font-size:12px;color:#000;text-align:right;">23.0</div>
<div class="t" style="left:1706px;top:786px;height:24px;line-height:24px;font-size:12px;color:#000;">-0.4</div>
<div class="t" style="right:1670px;top:820px;height:24px;line-height:24px;font-size:12px;color:#000;text-align:right;">22.5</div>
<div class="t" style="left:1706px;top:820px;height:24px;line-height:24px;font-size:12px;color:#000;">-0.5</div>
<div class="t" style="right:1670px;top:853px;height:24px;line-height:24px;font-size:12px;color:#000;text-align:right;">22.0</div>
<div class="t" style="left:1706px;top:853px;height:24px;line-height:24px;font-size:12px;color:#000;">-0.6</div>
<div class="t" style="right:1670px;top:887px;height:24px;line-height:24px;font-size:12px;color:#000;text-align:right;">21.5</div>
<div class="t" style="left:1706px;top:887px;height:24px;line-height:24px;font-size:12px;color:#000;">-0.7</div>
<div class="t" style="right:1670px;top:920px;height:24px;line-height:24px;font-size:12px;color:#000;text-align:right;">21.0</div>
<div class="t" style="left:1706px;top:920px;height:24px;line-height:24px;font-size:12px;color:#000;">-0.8</div>
<div class="t" style="right:1670px;top:954px;height:24px;line-height:24px;font-size:12px;color:#000;text-align:right;">20.5</div>
<div class="t" style="left:1706px;top:954px;height:24px;line-height:24px;font-size:12px;color:#000;">-0.9</div>
<div class="t" style="right:1670px;top:988px;height:24px;line-height:24px;font-size:12px;color:#000;text-align:right;">20.0</div>
<div class="t" style="left:1706px;top:988px;height:24px;line-height:24px;font-size:12px;color:#000;">-1.0</div>
<div class="t" style="left:53px;width:400px;top:1003px;height:24px;line-height:24px;font-size:12px;color:#000;text-align:center;">14:06:07</div>
<div class="t" style="left:134px;width:400px;top:1003px;height:24px;line-height:24px;font-size:12px;color:#000;text-align:center;">14:16:07</div>
<div class="t" style="left:214px;width:400px;top:1003px;height:24px;line-height:24px;font-size:12px;color:#000;text-align:center;">14:26:07</div>
<div class="t" style="left:295px;width:400px;top:1003px;height:24px;line-height:24px;font-size:12px;color:#000;text-align:center;">14:36:07</div>
<div class="t" style="left:375px;width:400px;top:1003px;height:24px;line-height:24px;font-size:12px;color:#000;text-align:center;">14:46:07</div>
<div class="t" style="left:456px;width:400px;top:1003px;height:24px;line-height:24px;font-size:12px;color:#000;text-align:center;">14:56:07</div>
<div class="t" style="left:536px;width:400px;top:1003px;height:24px;line-height:24px;font-size:12px;color:#000;text-align:center;">15:06:07</div>
<div class="t" style="left:616px;width:400px;top:1003px;height:24px;line-height:24px;font-size:12px;color:#000;text-align:center;">15:16:07</div>
<div class="t" style="left:697px;width:400px;top:1003px;height:24px;line-height:24px;font-size:12px;color:#000;text-align:center;">15:26:07</div>
<div class="t" style="left:777px;width:400px;top:1003px;height:24px;line-height:24px;font-size:12px;color:#000;text-align:center;">15:36:07</div>
<div class="t" style="left:858px;width:400px;top:1003px;height:24px;line-height:24px;font-size:12px;color:#000;text-align:center;">15:46:07</div>
<div class="t" style="left:938px;width:400px;top:1003px;height:24px;line-height:24px;font-size:12px;color:#000;text-align:center;">15:56:07</div>
<div class="t" style="left:1019px;width:400px;top:1003px;height:24px;line-height:24px;font-size:12px;color:#000;text-align:center;">16:06:07</div>
<div class="t" style="left:1099px;width:400px;top:1003px;height:24px;line-height:24px;font-size:12px;color:#000;text-align:center;">16:16:07</div>
<div class="t" style="left:1180px;width:400px;top:1003px;height:24px;line-height:24px;font-size:12px;color:#000;text-align:center;">16:26:07</div>
<div class="t" style="left:1260px;width:400px;top:1003px;height:24px;line-height:24px;font-size:12px;color:#000;text-align:center;">16:36:07</div>
<div class="t" style="left:1340px;width:400px;top:1003px;height:24px;line-height:24px;font-size:12px;color:#000;text-align:center;">16:46:07</div>
<div class="t" style="left:1421px;width:400px;top:1003px;height:24px;line-height:24px;font-size:12px;color:#000;text-align:center;">16:56:07</div>
<div class="t" style="left:1501px;width:400px;top:1003px;height:24px;line-height:24px;font-size:12px;color:#000;text-align:center;">17:06:02</div>
<svg class="b" style="left:0;top:0" width="1920" height="1080"><path d="M253.5 1001V1006M334.5 1001V1006M414.5 1001V1006M495.5 1001V1006M575.5 1001V1006M656.5 1001V1006M736.5 1001V1006M816.5 1001V1006M897.5 1001V1006M977.5 1001V1006M1058.5 1001V1006M1138.5 1001V1006M1219.5 1001V1006M1299.5 1001V1006M1380.5 1001V1006M1460.5 1001V1006M1540.5 1001V1006M1621.5 1001V1006M1701.5 1001V1006" stroke="#000" stroke-width="1" shape-rendering="crispEdges"/></svg>
<div class="t" style="left:114px;top:640px;width:200px;height:24px;line-height:24px;font-size:12px;color:#000;text-align:center;transform:rotate(-90deg)">温度/环境温度</div>
<div class="t" style="left:1641px;top:639px;width:200px;height:24px;line-height:24px;font-size:12px;color:#000;text-align:center;transform:rotate(90deg)">功率/环境湿度</div>
<svg class="b" style="left:1797px;top:81px" width="13" height="13" viewBox="0 0 13 13"><rect x="0.5" y="0.5" width="12" height="12" fill="#fff" stroke="#333"/><path d="M2.5 6.5l2.8 2.8 5.2-5.8" fill="none" stroke="#222" stroke-width="1.3"/></svg>
<div class="t" style="left:1816px;top:77px;height:24px;line-height:24px;font-size:12px;color:#000;">电压</div>
<svg class="b" style="left:1876px;top:80px" width="28" height="20" viewBox="0 0 28 20"><rect x="0" y="0" width="28" height="20" fill="#e0e0e0"/><rect x="1" y="1" width="27" height="19" fill="#555"/><rect x="1" y="1" width="26" height="18" fill="#212121"/><path d="M2 14.5L10 2.5L18 14.5L26 2.5" fill="none" stroke="#f00010" stroke-width="1.7"/></svg>
<svg class="b" style="left:1797px;top:106px" width="13" height="13" viewBox="0 0 13 13"><rect x="0.5" y="0.5" width="12" height="12" fill="#fff" stroke="#333"/><path d="M2.5 6.5l2.8 2.8 5.2-5.8" fill="none" stroke="#222" stroke-width="1.3"/></svg>
<div class="t" style="left:1816px;top:102px;height:24px;line-height:24px;font-size:12px;color:#000;">电流</div>
<svg class="b" style="left:1876px;top:105px" width="28" height="20" viewBox="0 0 28 20"><rect x="0" y="0" width="28" height="20" fill="#e0e0e0"/><rect x="1" y="1" width="27" height="19" fill="#555"/><rect x="1" y="1" width="26" height="18" fill="#212121"/><path d="M2 14.5L10 2.5L18 14.5L26 2.5" fill="none" stroke="#40f000" stroke-width="1.7"/></svg>
<svg class="b" style="left:1797px;top:549px" width="13" height="13" viewBox="0 0 13 13"><rect x="0.5" y="0.5" width="12" height="12" fill="#fff" stroke="#333"/><path d="M2.5 6.5l2.8 2.8 5.2-5.8" fill="none" stroke="#222" stroke-width="1.3"/></svg>
<div class="t" style="left:1816px;top:546px;height:24px;line-height:24px;font-size:12px;color:#000;">功率</div>
<svg class="b" style="left:1876px;top:548px" width="28" height="20" viewBox="0 0 28 20"><rect x="0" y="0" width="28" height="20" fill="#e0e0e0"/><rect x="1" y="1" width="27" height="19" fill="#555"/><rect x="1" y="1" width="26" height="18" fill="#212121"/><path d="M2 14.5L10 2.5L18 14.5L26 2.5" fill="none" stroke="#ffffff" stroke-width="1.7"/></svg>
<svg class="b" style="left:1797px;top:574px" width="13" height="13" viewBox="0 0 13 13"><rect x="0.5" y="0.5" width="12" height="12" fill="#fff" stroke="#333"/></svg>
<div class="t" style="left:1816px;top:571px;height:24px;line-height:24px;font-size:12px;color:#000;">环境温度</div>
<svg class="b" style="left:1876px;top:573px" width="28" height="20" viewBox="0 0 28 20"><rect x="0" y="0" width="28" height="20" fill="#e0e0e0"/><rect x="1" y="1" width="27" height="19" fill="#555"/><rect x="1" y="1" width="26" height="18" fill="#8c8c8c"/><path d="M2 14.5L10 2.5L18 14.5L26 2.5" fill="none" stroke="#f0a0a0" stroke-width="1.7"/></svg>
<svg class="b" style="left:1797px;top:599px" width="13" height="13" viewBox="0 0 13 13"><rect x="0.5" y="0.5" width="12" height="12" fill="#fff" stroke="#333"/></svg>
<div class="t" style="left:1816px;top:596px;height:24px;line-height:24px;font-size:12px;color:#000;">环境湿度</div>
<svg class="b" style="left:1876px;top:598px" width="28" height="20" viewBox="0 0 28 20"><rect x="0" y="0" width="28" height="20" fill="#e0e0e0"/><rect x="1" y="1" width="27" height="19" fill="#555"/><rect x="1" y="1" width="26" height="18" fill="#8c8c8c"/><path d="M2 14.5L10 2.5L18 14.5L26 2.5" fill="none" stroke="#80f080" stroke-width="1.7"/></svg>
<svg class="b" style="left:1797px;top:624px" width="13" height="13" viewBox="0 0 13 13"><rect x="0.5" y="0.5" width="12" height="12" fill="#fff" stroke="#333"/><path d="M2.5 6.5l2.8 2.8 5.2-5.8" fill="none" stroke="#222" stroke-width="1.3"/></svg>
<div class="t" style="left:1816px;top:621px;height:24px;line-height:24px;font-size:12px;color:#000;">温度 1</div>
<svg class="b" style="left:1876px;top:623px" width="28" height="20" viewBox="0 0 28 20"><rect x="0" y="0" width="28" height="20" fill="#e0e0e0"/><rect x="1" y="1" width="27" height="19" fill="#555"/><rect x="1" y="1" width="26" height="18" fill="#212121"/><path d="M2 14.5L10 2.5L18 14.5L26 2.5" fill="none" stroke="#40b8f0" stroke-width="1.7"/></svg>
<svg class="b" style="left:1797px;top:649px" width="13" height="13" viewBox="0 0 13 13"><rect x="0.5" y="0.5" width="12" height="12" fill="#fff" stroke="#333"/><path d="M2.5 6.5l2.8 2.8 5.2-5.8" fill="none" stroke="#222" stroke-width="1.3"/></svg>
<div class="t" style="left:1816px;top:646px;height:24px;line-height:24px;font-size:12px;color:#000;">温度 2</div>
<svg class="b" style="left:1876px;top:648px" width="28" height="20" viewBox="0 0 28 20"><rect x="0" y="0" width="28" height="20" fill="#e0e0e0"/><rect x="1" y="1" width="27" height="19" fill="#555"/><rect x="1" y="1" width="26" height="18" fill="#212121"/><path d="M2 14.5L10 2.5L18 14.5L26 2.5" fill="none" stroke="#d4f46c" stroke-width="1.7"/></svg>
<svg class="b" style="left:1797px;top:674px" width="13" height="13" viewBox="0 0 13 13"><rect x="0.5" y="0.5" width="12" height="12" fill="#fff" stroke="#333"/><path d="M2.5 6.5l2.8 2.8 5.2-5.8" fill="none" stroke="#222" stroke-width="1.3"/></svg>
<div class="t" style="left:1816px;top:671px;height:24px;line-height:24px;font-size:12px;color:#000;">温度 3</div>
<svg class="b" style="left:1876px;top:673px" width="28" height="20" viewBox="0 0 28 20"><rect x="0" y="0" width="28" height="20" fill="#e0e0e0"/><rect x="1" y="1" width="27" height="19" fill="#555"/><rect x="1" y="1" width="26" height="18" fill="#212121"/><path d="M2 14.5L10 2.5L18 14.5L26 2.5" fill="none" stroke="#c050f0" stroke-width="1.7"/></svg>
<svg class="b" style="left:1797px;top:699px" width="13" height="13" viewBox="0 0 13 13"><rect x="0.5" y="0.5" width="12" height="12" fill="#fff" stroke="#333"/><path d="M2.5 6.5l2.8 2.8 5.2-5.8" fill="none" stroke="#222" stroke-width="1.3"/></svg>
<div class="t" style="left:1816px;top:696px;height:24px;line-height:24px;font-size:12px;color:#000;">温度 4</div>
<svg class="b" style="left:1876px;top:698px" width="28" height="20" viewBox="0 0 28 20"><rect x="0" y="0" width="28" height="20" fill="#e0e0e0"/><rect x="1" y="1" width="27" height="19" fill="#555"/><rect x="1" y="1" width="26" height="18" fill="#212121"/><path d="M2 14.5L10 2.5L18 14.5L26 2.5" fill="none" stroke="#f0a818" stroke-width="1.7"/></svg>
<svg class="b" style="left:1797px;top:724px" width="13" height="13" viewBox="0 0 13 13"><rect x="0.5" y="0.5" width="12" height="12" fill="#fff" stroke="#333"/><path d="M2.5 6.5l2.8 2.8 5.2-5.8" fill="none" stroke="#222" stroke-width="1.3"/></svg>
<div class="t" style="left:1816px;top:721px;height:24px;line-height:24px;font-size:12px;color:#000;">温度 5</div>
<svg class="b" style="left:1876px;top:723px" width="28" height="20" viewBox="0 0 28 20"><rect x="0" y="0" width="28" height="20" fill="#e0e0e0"/><rect x="1" y="1" width="27" height="19" fill="#555"/><rect x="1" y="1" width="26" height="18" fill="#212121"/><path d="M2 14.5L10 2.5L18 14.5L26 2.5" fill="none" stroke="#4848f0" stroke-width="1.7"/></svg>
<svg class="b" style="left:1797px;top:749px" width="13" height="13" viewBox="0 0 13 13"><rect x="0.5" y="0.5" width="12" height="12" fill="#fff" stroke="#333"/><path d="M2.5 6.5l2.8 2.8 5.2-5.8" fill="none" stroke="#222" stroke-width="1.3"/></svg>
<div class="t" style="left:1816px;top:746px;height:24px;line-height:24px;font-size:12px;color:#000;">温度 6</div>
<svg class="b" style="left:1876px;top:748px" width="28" height="20" viewBox="0 0 28 20"><rect x="0" y="0" width="28" height="20" fill="#e0e0e0"/><rect x="1" y="1" width="27" height="19" fill="#555"/><rect x="1" y="1" width="26" height="18" fill="#212121"/><path d="M2 14.5L10 2.5L18 14.5L26 2.5" fill="none" stroke="#f040a8" stroke-width="1.7"/></svg>
<svg class="b" style="left:1797px;top:774px" width="13" height="13" viewBox="0 0 13 13"><rect x="0.5" y="0.5" width="12" height="12" fill="#fff" stroke="#333"/><path d="M2.5 6.5l2.8 2.8 5.2-5.8" fill="none" stroke="#222" stroke-width="1.3"/></svg>
<div class="t" style="left:1816px;top:771px;height:24px;line-height:24px;font-size:12px;color:#000;">温度 7</div>
<svg class="b" style="left:1876px;top:773px" width="28" height="20" viewBox="0 0 28 20"><rect x="0" y="0" width="28" height="20" fill="#e0e0e0"/><rect x="1" y="1" width="27" height="19" fill="#555"/><rect x="1" y="1" width="26" height="18" fill="#212121"/><path d="M2 14.5L10 2.5L18 14.5L26 2.5" fill="none" stroke="#40f0f0" stroke-width="1.7"/></svg>
<svg class="b" style="left:1797px;top:799px" width="13" height="13" viewBox="0 0 13 13"><rect x="0.5" y="0.5" width="12" height="12" fill="#fff" stroke="#333"/><path d="M2.5 6.5l2.8 2.8 5.2-5.8" fill="none" stroke="#222" stroke-width="1.3"/></svg>
<div class="t" style="left:1816px;top:796px;height:24px;line-height:24px;font-size:12px;color:#000;">温度 8</div>
<svg class="b" style="left:1876px;top:798px" width="28" height="20" viewBox="0 0 28 20"><rect x="0" y="0" width="28" height="20" fill="#e0e0e0"/><rect x="1" y="1" width="27" height="19" fill="#555"/><rect x="1" y="1" width="26" height="18" fill="#212121"/><path d="M2 14.5L10 2.5L18 14.5L26 2.5" fill="none" stroke="#606060" stroke-width="1.7"/></svg>
<svg class="b" style="left:1797px;top:824px" width="13" height="13" viewBox="0 0 13 13"><rect x="0.5" y="0.5" width="12" height="12" fill="#fff" stroke="#333"/><path d="M2.5 6.5l2.8 2.8 5.2-5.8" fill="none" stroke="#222" stroke-width="1.3"/></svg>
<div class="t" style="left:1816px;top:821px;height:24px;line-height:24px;font-size:12px;color:#000;">温度 9</div>
<svg class="b" style="left:1876px;top:823px" width="28" height="20" viewBox="0 0 28 20"><rect x="0" y="0" width="28" height="20" fill="#e0e0e0"/><rect x="1" y="1" width="27" height="19" fill="#555"/><rect x="1" y="1" width="26" height="18" fill="#212121"/><path d="M2 14.5L10 2.5L18 14.5L26 2.5" fill="none" stroke="#d01010" stroke-width="1.7"/></svg>
<svg class="b" style="left:1797px;top:849px" width="13" height="13" viewBox="0 0 13 13"><rect x="0.5" y="0.5" width="12" height="12" fill="#fff" stroke="#333"/><path d="M2.5 6.5l2.8 2.8 5.2-5.8" fill="none" stroke="#222" stroke-width="1.3"/></svg>
<div class="t" style="left:1816px;top:846px;height:24px;line-height:24px;font-size:12px;color:#000;">温度 10</div>
<svg class="b" style="left:1876px;top:848px" width="28" height="20" viewBox="0 0 28 20"><rect x="0" y="0" width="28" height="20" fill="#e0e0e0"/><rect x="1" y="1" width="27" height="19" fill="#555"/><rect x="1" y="1" width="26" height="18" fill="#212121"/><path d="M2 14.5L10 2.5L18 14.5L26 2.5" fill="none" stroke="#108010" stroke-width="1.7"/></svg>
<svg class="b" style="left:1797px;top:874px" width="13" height="13" viewBox="0 0 13 13"><rect x="0.5" y="0.5" width="12" height="12" fill="#fff" stroke="#333"/><path d="M2.5 6.5l2.8 2.8 5.2-5.8" fill="none" stroke="#222" stroke-width="1.3"/></svg>
<div class="t" style="left:1816px;top:871px;height:24px;line-height:24px;font-size:12px;color:#000;">温度 11</div>
<svg class="b" style="left:1876px;top:873px" width="28" height="20" viewBox="0 0 28 20"><rect x="0" y="0" width="28" height="20" fill="#e0e0e0"/><rect x="1" y="1" width="27" height="19" fill="#555"/><rect x="1" y="1" width="26" height="18" fill="#212121"/><path d="M2 14.5L10 2.5L18 14.5L26 2.5" fill="none" stroke="#1080c0" stroke-width="1.7"/></svg>
<svg class="b" style="left:1797px;top:899px" width="13" height="13" viewBox="0 0 13 13"><rect x="0.5" y="0.5" width="12" height="12" fill="#fff" stroke="#333"/><path d="M2.5 6.5l2.8 2.8 5.2-5.8" fill="none" stroke="#222" stroke-width="1.3"/></svg>
<div class="t" style="left:1816px;top:896px;height:24px;line-height:24px;font-size:12px;color:#000;">温度 12</div>
<svg class="b" style="left:1876px;top:898px" width="28" height="20" viewBox="0 0 28 20"><rect x="0" y="0" width="28" height="20" fill="#e0e0e0"/><rect x="1" y="1" width="27" height="19" fill="#555"/><rect x="1" y="1" width="26" height="18" fill="#212121"/><path d="M2 14.5L10 2.5L18 14.5L26 2.5" fill="none" stroke="#a0e010" stroke-width="1.7"/></svg>
<svg class="b" style="left:1797px;top:924px" width="13" height="13" viewBox="0 0 13 13"><rect x="0.5" y="0.5" width="12" height="12" fill="#fff" stroke="#333"/><path d="M2.5 6.5l2.8 2.8 5.2-5.8" fill="none" stroke="#222" stroke-width="1.3"/></svg>
<div class="t" style="left:1816px;top:921px;height:24px;line-height:24px;font-size:12px;color:#000;">温度 13</div>
<svg class="b" style="left:1876px;top:923px" width="28" height="20" viewBox="0 0 28 20"><rect x="0" y="0" width="28" height="20" fill="#e0e0e0"/><rect x="1" y="1" width="27" height="19" fill="#555"/><rect x="1" y="1" width="26" height="18" fill="#212121"/><path d="M2 14.5L10 2.5L18 14.5L26 2.5" fill="none" stroke="#8010c0" stroke-width="1.7"/></svg>
<svg class="b" style="left:1797px;top:949px" width="13" height="13" viewBox="0 0 13 13"><rect x="0.5" y="0.5" width="12" height="12" fill="#fff" stroke="#333"/><path d="M2.5 6.5l2.8 2.8 5.2-5.8" fill="none" stroke="#222" stroke-width="1.3"/></svg>
<div class="t" style="left:1816px;top:946px;height:24px;line-height:24px;font-size:12px;color:#000;">温度 14</div>
<svg class="b" style="left:1876px;top:948px" width="28" height="20" viewBox="0 0 28 20"><rect x="0" y="0" width="28" height="20" fill="#e0e0e0"/><rect x="1" y="1" width="27" height="19" fill="#555"/><rect x="1" y="1" width="26" height="18" fill="#212121"/><path d="M2 14.5L10 2.5L18 14.5L26 2.5" fill="none" stroke="#c08010" stroke-width="1.7"/></svg>
<svg class="b" style="left:1797px;top:974px" width="13" height="13" viewBox="0 0 13 13"><rect x="0.5" y="0.5" width="12" height="12" fill="#fff" stroke="#333"/><path d="M2.5 6.5l2.8 2.8 5.2-5.8" fill="none" stroke="#222" stroke-width="1.3"/></svg>
<div class="t" style="left:1816px;top:971px;height:24px;line-height:24px;font-size:12px;color:#000;">温度 15</div>
<svg class="b" style="left:1876px;top:973px" width="28" height="20" viewBox="0 0 28 20"><rect x="0" y="0" width="28" height="20" fill="#e0e0e0"/><rect x="1" y="1" width="27" height="19" fill="#555"/><rect x="1" y="1" width="26" height="18" fill="#212121"/><path d="M2 14.5L10 2.5L18 14.5L26 2.5" fill="none" stroke="#1010a0" stroke-width="1.7"/></svg>
<svg class="b" style="left:1797px;top:999px" width="13" height="13" viewBox="0 0 13 13"><rect x="0.5" y="0.5" width="12" height="12" fill="#fff" stroke="#333"/><path d="M2.5 6.5l2.8 2.8 5.2-5.8" fill="none" stroke="#222" stroke-width="1.3"/></svg>
<div class="t" style="left:1816px;top:996px;height:24px;line-height:24px;font-size:12px;color:#000;">温度 16</div>
<svg class="b" style="left:1876px;top:998px" width="28" height="20" viewBox="0 0 28 20"><rect x="0" y="0" width="28" height="20" fill="#e0e0e0"/><rect x="1" y="1" width="27" height="19" fill="#555"/><rect x="1" y="1" width="26" height="18" fill="#212121"/><path d="M2 14.5L10 2.5L18 14.5L26 2.5" fill="none" stroke="#c01080" stroke-width="1.7"/></svg>
<div class="b" style="left:176px;top:1028px;width:1742px;height:1px;background:#c8c8c8"></div>
<div class="b" style="left:179px;top:1030px;width:80px;height:21px;background:#fff"></div>
<div class="t" style="left:188px;top:1029px;height:24px;line-height:24px;font-size:12px;color:#000;">温度 10</div>
<div class="b" style="left:241px;top:1031px;width:17px;height:19px;background:#dcdcdc;border:1px solid #a8a8a8;box-sizing:border-box"></div>
<svg class="b" style="left:244px;top:1037px" width="11" height="7" viewBox="0 0 11 7"><path d="M1 1l4.5 4.5L10 1" fill="none" stroke="#555" stroke-width="1"/></svg>
<div class="t" style="left:280px;top:1029px;height:24px;line-height:24px;font-size:12px;color:#000;">Max :</div>
<div class="t" style="left:323px;top:1029px;height:24px;line-height:24px;font-size:12px;color:#000;">25.90</div>
<div class="t" style="left:376px;top:1029px;height:24px;line-height:24px;font-size:12px;color:#000;">Min :</div>
<div class="t" style="left:416px;top:1029px;height:24px;line-height:24px;font-size:12px;color:#000;">-2.30</div>
<div class="t" style="left:469px;top:1029px;height:24px;line-height:24px;font-size:12px;color:#000;">Avg :</div>
<div class="t" style="left:509px;top:1029px;height:24px;line-height:24px;font-size:12px;color:#000;">24.39</div>
<div class="b" style="left:1593px;top:1030px;width:113px;height:21px;background:#fff"></div>
<div class="t" style="left:1441px;width:400px;top:1029px;height:24px;line-height:24px;font-size:12px;color:#000;text-align:center;">3小时</div>
<div class="b" style="left:1689px;top:1031px;width:17px;height:19px;background:#dcdcdc;border:1px solid #a8a8a8;box-sizing:border-box"></div>
<svg class="b" style="left:1692px;top:1037px" width="11" height="7" viewBox="0 0 11 7"><path d="M1 1l4.5 4.5L10 1" fill="none" stroke="#555" stroke-width="1"/></svg>
<div class="b" style="left:1725px;top:1029px;width:24px;height:23px;background:#a29e9e"></div>
<div class="b" style="left:1749px;top:1029px;width:169px;height:23px;background:#f0f0f0"></div>
<svg class="b" style="left:1720px;top:1028px" width="200" height="26" viewBox="1720 1028 200 26">
<path d="M1733 1041.5h9.5M1737.5 1037v9.5" stroke="#000" stroke-width="1.1"/>
<g fill="none" stroke="#000" stroke-width="0.9" stroke-linecap="round"><path d="M1757.5 1047.5l-2.2-4 0.8-0.8 1.5 1.6M1759.5 1043.5v-5.5M1761.5 1043v-6.5M1763.5 1043v-5.8M1765 1043.5v-4.5l0.9-0.3 0.3 4.5-1.3 4.3"/></g>
<g stroke="#000" stroke-width="1" stroke-dasharray="1 1"><path d="M1779 1040.5h12M1784.5 1035v11"/></g>
<path d="M1777.5 1040.5l2.5-2v4zM1791.5 1040.5l-2.5-2v4zM1784.5 1033.5l-2 2.5h4zM1784.5 1046.5l-2-2.5h4z" fill="#000"/>
<g stroke="#000" stroke-width="1" stroke-dasharray="1 1.2"><path d="M1801 1040.5h14M1808.5 1033v14"/></g>
<path d="M1808.5 1036.5l-1.3 1.3 1.3 1.3 1.3-1.3zM1808.5 1042l-1.3 1.3 1.3 1.3 1.3-1.3zM1805.5 1039.2l-1.3 1.3 1.3 1.3 1.3-1.3zM1811.5 1039.2l-1.3 1.3 1.3 1.3 1.3-1.3z" fill="#000" stroke="#000" stroke-width="0.6"/>
<g stroke="#777" stroke-width="0.6">
<rect x="1823.5" y="1035.5" width="19" height="11" rx="1" fill="#8c8c8c"/>
<rect x="1847.5" y="1035.5" width="19" height="11" rx="1" fill="#8c8c8c"/>
<rect x="1871.5" y="1035.5" width="19" height="11" rx="1" fill="#8c8c8c"/>
<rect x="1895.5" y="1035.5" width="19" height="11" rx="1" fill="#8c8c8c"/></g>
<rect x="1826" y="1037" width="12" height="5" fill="#000" stroke="#f0f000" stroke-width="0.9" stroke-dasharray="0.9 0.9"/>
<rect x="1848.5" y="1036.5" width="17" height="9" fill="#000" stroke="#f0f000" stroke-width="0.9" stroke-dasharray="0.9 0.9"/>
<rect x="1879" y="1036" width="8" height="10" fill="#000" stroke="#f0f000" stroke-width="0.9" stroke-dasharray="0.9 0.9"/>
<rect x="1896" y="1037" width="18" height="8" fill="#000"/>
<path d="M1896 1037.3h18M1896 1044.7h18" stroke="#f0f000" stroke-width="0.9" stroke-dasharray="0.9 0.9"/>
<g fill="none" stroke="#e8e8e8" stroke-width="0.7">
<path d="M1825 1044l2.5-4 1.5 4 2 1.5 2-5 1.5 5 3-0.5 3-2.5"/>
<path d="M1849 1044l2.5-4 1.5 4 2 1.5 2-5 1.5 5 3-0.5 3-2.5"/>
<path d="M1873 1044l2.5-4 1.5 4 2 1.5 2-5 1.5 5 3-0.5 3-2.5"/>
<path d="M1897 1044l2.5-4 1.5 4 2 1.5 2-5 1.5 5 3-0.5 3-2.5"/></g>
<path d="M1872.5 1033h7M1879.5 1031.5v3M1886.5 1031.5v3M1887 1033h3" stroke="#000" stroke-width="0.9"/>
<path d="M1872 1033l1.8-1.3v2.6zM1890.5 1033l-1.8-1.3v2.6z" fill="#000"/>
<path d="M1904.5 1031v4.5M1904.5 1046.5v4.5" stroke="#000" stroke-width="0.9"/>
<path d="M1904.5 1030.5l-1.5 2h3zM1904.5 1051.5l-1.5-2h3z" fill="#000"/>
</svg>
<div class="b" style="left:172px;top:1054px;width:1px;height:23px;background:#a0a0a0"></div>
<div class="b" style="left:317px;top:1054px;width:1px;height:23px;background:#a0a0a0"></div>
<div class="b" style="left:463px;top:1054px;width:1px;height:23px;background:#a0a0a0"></div>
<div class="b" style="left:595px;top:1054px;width:1px;height:23px;background:#a0a0a0"></div>
<div class="b" style="left:0px;top:1052px;width:1920px;height:1px;background:#ececec"></div>
<div class="b" style="left:0px;top:1053px;width:1920px;height:1px;background:#adadad"></div>
<svg class="b" style="left:4px;top:1056px" width="20" height="20" viewBox="0 0 20 20">
<defs><radialGradient id="gg" cx="0.4" cy="0.35" r="0.7"><stop offset="0" stop-color="#e8ecf8"/><stop offset="1" stop-color="#7c88b8"/></radialGradient></defs>
<path d="M8.5 1h3l0.6 2.6 2.2 1 2.3-1.4 2.1 2.1-1.4 2.3 1 2.2 2.6 0.6v3l-2.6 0.6-1 2.2 1.4 2.3-2.1 2.1-2.3-1.4-2.2 1-0.6 2.6h-3l-0.6-2.6-2.2-1-2.3 1.4-2.1-2.1 1.4-2.3-1-2.2L0 13v-3l2.6-0.6 1-2.2L2.2 4.9 4.3 2.8l2.3 1.4 2.2-1z" fill="url(#gg)"/>
<circle cx="10" cy="11" r="3" fill="#d9d9d9" stroke="#8890b0" stroke-width="0.8"/></svg>
<div class="t" style="left:30px;top:1055px;height:24px;line-height:24px;font-size:12px;color:#000;">连接端口:&nbsp; COM4</div>
<div class="t" style="left:175px;top:1055px;height:24px;line-height:24px;font-size:12px;color:#000;">采集模式:&nbsp; 无线</div>
<div class="t" style="left:320px;top:1055px;height:24px;line-height:24px;font-size:12px;color:#000;">扫描速度:&nbsp; 0.5 S</div>
<div class="t" style="left:466px;top:1055px;height:24px;line-height:24px;font-size:12px;color:#000;">信道值:&nbsp; CH 21</div>
<svg class="b" style="left:1885px;top:1055px" width="22" height="22" viewBox="0 0 22 22">
<defs><radialGradient id="led" cx="0.4" cy="0.3" r="0.7"><stop offset="0" stop-color="#c8ff90"/><stop offset="0.5" stop-color="#50e010"/><stop offset="1" stop-color="#2a9a00"/></radialGradient></defs>
<circle cx="11.5" cy="11.5" r="9" fill="#eaeaea"/><circle cx="10.5" cy="10.5" r="7" fill="url(#led)"/></svg>
</body></html>
